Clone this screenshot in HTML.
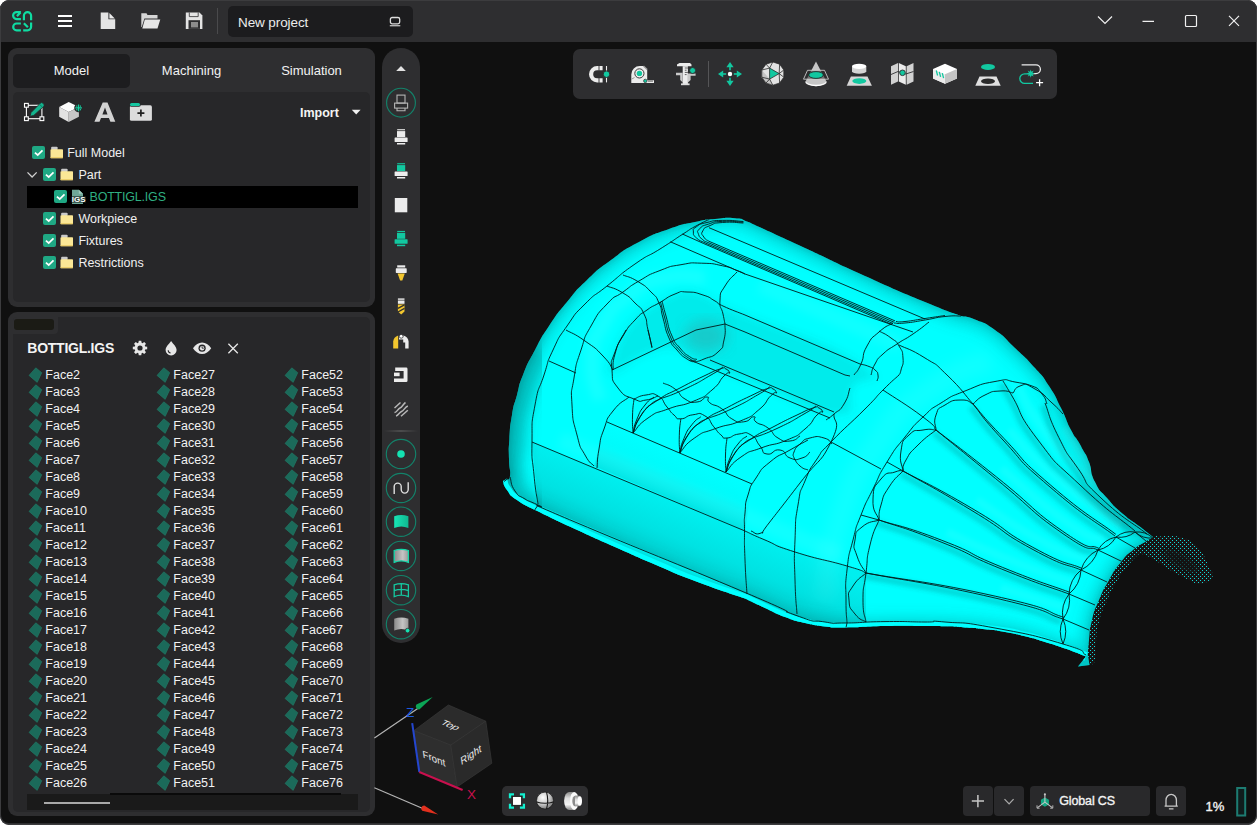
<!DOCTYPE html>
<html lang="en">
<head>
<meta charset="utf-8">
<title>New project</title>
<style>
*{box-sizing:border-box;margin:0;padding:0}
html,body{width:1257px;height:825px;overflow:hidden;background:#fff}
body{font-family:"Liberation Sans",sans-serif;font-size:13px;color:#f0f0f0;position:relative}
.abs{position:absolute}
#win{position:absolute;left:0;top:0;width:1257px;height:825px;background:#2e2e30;border-radius:9px;overflow:hidden}
#view{position:absolute;left:1px;top:42px;width:1255px;height:781px;background:#101010;border-radius:0 0 8px 8px}
#titlebar{position:absolute;left:0;top:0;width:1257px;height:42px;background:#2e2e30}
#proj{position:absolute;left:228px;top:6px;width:185px;height:31px;background:#1c1c1e;border-radius:5px}
#proj span{position:absolute;left:10px;top:9px;font-size:13.5px;color:#ececec;letter-spacing:-0.1px}
.sep{position:absolute;background:#4a4a4c}
/* left panels */
.panel{position:absolute;background:#2e2e30;border-radius:9px}
.inner{position:absolute;background:#272729;border-radius:5px}
.tab{position:absolute;top:6px;height:34px;line-height:33px;text-align:center;font-size:13px;color:#f2f2f2;border-radius:5px}
.tab.sel{background:#1d1d1f}
.row{position:absolute;height:22px;line-height:22px;font-size:12.5px;color:#f0f0f0;white-space:nowrap}
.cb{position:absolute;width:13px;height:13px;border-radius:2px;background:#1fa884}
.cb svg{position:absolute;left:0;top:0}
.fold{position:absolute;width:14px;height:13px}
.face{position:absolute;font-size:12.5px;line-height:17px;height:17px;color:#f2f2f2;white-space:nowrap}
.fi{position:absolute;width:15px;height:16.4px}
/* toolbars */
#vbar{position:absolute;left:382px;top:48px;width:38px;height:595px;background:#2e2e30;border-radius:19px}
#tbar{position:absolute;left:573px;top:49px;width:484px;height:50px;background:#2e2e30;border-radius:7px}
.btn{position:absolute;background:#2e2e30;border-radius:4px}
</style>
</head>
<body>
<div id="win">
<div id="view"></div>
<div id="titlebar"></div>

<svg class="abs" style="left:0;top:0" width="1257" height="825" viewBox="0 0 1257 825">
<defs>
<pattern id="stp" width="4" height="4" patternUnits="userSpaceOnUse"><rect width="4" height="4" fill="#181414"/><rect x="0" y="0" width="1" height="1" fill="#0fd6d6"/><rect x="2" y="2" width="1" height="1" fill="#0fd6d6"/></pattern>
<clipPath id="bodyclip"><path d="M503.0 481.0C504.0 480.3 503.7 480.7 506.0 479.0C508.3 477.3 509.0 482.7 510.0 476.0C511.0 469.3 509.2 471.3 509.0 459.0C508.8 446.7 508.4 453.7 509.4 439.0C510.4 424.3 509.5 429.7 512.0 415.0C514.5 400.3 513.3 408.3 517.0 395.0C520.7 381.7 517.0 390.0 523.0 375.0C529.0 360.0 526.3 366.3 535.0 350.0C543.7 333.7 538.3 342.0 549.0 326.0C559.7 310.0 554.3 317.3 567.0 302.0C579.7 286.7 572.3 294.0 587.0 280.0C601.7 266.0 593.7 272.7 611.0 260.0C628.3 247.3 619.7 252.3 639.0 242.0C658.3 231.7 650.3 235.7 669.0 229.0C687.7 222.3 679.7 225.3 695.0 222.0C710.3 218.7 701.7 220.2 715.0 219.0C728.3 217.8 724.3 217.5 735.0 218.3C745.7 219.1 738.7 218.5 747.0 221.5C755.3 224.5 740.7 218.5 760.0 227.3C779.3 236.1 770.0 231.8 805.0 248.0C840.0 264.2 825.0 258.0 865.0 276.0C905.0 294.0 893.0 288.7 925.0 302.0C957.0 315.3 949.0 311.3 961.0 316.0C965.7 317.2 963.7 314.8 975.0 319.5C986.3 324.2 981.7 320.5 995.0 330.0C1008.3 339.5 1001.7 335.3 1015.0 348.0C1028.3 360.7 1023.7 355.3 1035.0 368.0C1046.3 380.7 1040.3 372.7 1049.0 386.0C1057.7 399.3 1053.7 393.3 1061.0 408.0C1068.3 422.7 1065.3 419.0 1071.0 430.0C1076.7 441.0 1074.0 434.3 1078.0 441.0C1082.0 447.7 1079.3 443.0 1083.0 450.0C1086.7 457.0 1085.0 451.3 1089.0 462.0C1093.0 472.7 1089.0 470.0 1095.0 482.0C1101.0 494.0 1097.7 487.3 1107.0 498.0C1116.3 508.7 1112.3 504.7 1123.0 514.0C1133.7 523.3 1129.0 518.3 1139.0 526.0C1149.0 533.7 1148.3 533.3 1153.0 537.0C1150.3 538.7 1151.7 537.7 1145.0 542.0C1138.3 546.3 1141.0 543.3 1133.0 550.0C1125.0 556.7 1129.0 552.0 1121.0 562.0C1113.0 572.0 1116.3 567.3 1109.0 580.0C1101.7 592.7 1104.7 586.7 1099.0 600.0C1093.3 613.3 1095.3 606.7 1092.0 620.0C1088.7 633.3 1090.3 628.0 1089.0 640.0C1087.7 652.0 1088.3 650.7 1088.0 656.0L1089.5 665L1078 666.5L1086 656.5C1079.0 653.8 1078.7 653.3 1065.0 648.5C1051.3 643.7 1058.3 646.1 1045.0 642.0C1031.7 637.9 1038.3 639.6 1025.0 636.3C1011.7 633.0 1018.3 634.3 1005.0 632.0C991.7 629.7 998.3 630.8 985.0 629.3C971.7 627.8 978.3 628.5 965.0 627.5C951.7 626.5 958.3 626.8 945.0 626.3C931.7 625.8 945.0 626.1 925.0 626.0C905.0 625.9 911.7 625.5 885.0 626.0C858.3 626.5 865.0 627.3 845.0 627.4C825.0 627.5 838.3 627.9 825.0 626.4C811.7 624.9 818.3 626.1 805.0 623.0C791.7 619.9 798.3 622.0 785.0 617.0C771.7 612.0 778.3 614.2 765.0 608.0C751.7 601.8 751.7 601.7 745.0 598.5C728.3 592.7 725.0 592.3 695.0 581.0C665.0 569.7 681.7 575.8 655.0 564.5C628.3 553.2 641.7 558.8 615.0 547.0C588.3 535.2 601.7 541.3 575.0 529.0C548.3 516.7 548.3 516.3 535.0 510.0C529.0 506.7 526.3 506.7 517.0 500.0C507.7 493.3 511.7 496.3 507.0 490.0C502.3 483.7 504.3 484.0 503.0 481.0Z"/></clipPath>
<filter id="b8" x="-20%" y="-20%" width="140%" height="140%"><feGaussianBlur stdDeviation="7"/></filter>
<filter id="b4" x="-20%" y="-20%" width="140%" height="140%"><feGaussianBlur stdDeviation="4"/></filter>
<filter id="b2" x="-20%" y="-20%" width="140%" height="140%"><feGaussianBlur stdDeviation="2"/></filter>
<linearGradient id="sideg" gradientUnits="userSpaceOnUse" x1="640" y1="487" x2="614" y2="549"><stop offset="0" stop-color="#006060" stop-opacity="0.1"/><stop offset="0.5" stop-color="#006060" stop-opacity="0.18"/><stop offset="0.85" stop-color="#006060" stop-opacity="0.3"/><stop offset="1" stop-color="#006060" stop-opacity="0.44"/></linearGradient>
<linearGradient id="bandg" gradientUnits="userSpaceOnUse" x1="680" y1="453" x2="662" y2="496"><stop offset="0" stop-color="#006060" stop-opacity="0"/><stop offset="0.5" stop-color="#006060" stop-opacity="0.03"/><stop offset="1" stop-color="#006060" stop-opacity="0.17"/></linearGradient>
</defs>
<path d="M1152.4 538.0C1160.4 532.8 1154.5 537.2 1160.0 536.5C1165.5 535.8 1164.3 536.2 1169.0 536.0C1173.7 535.8 1169.1 535.3 1174.0 536.0C1178.9 536.7 1177.5 535.9 1183.6 538.0C1189.7 540.1 1187.1 538.5 1192.4 542.4C1197.7 546.3 1195.2 544.1 1199.6 549.6C1204.0 555.1 1202.1 552.4 1205.5 559.0C1208.9 565.6 1207.6 565.0 1209.8 569.3C1212.0 573.6 1211.4 568.9 1212.0 572.0C1212.6 575.1 1213.8 575.2 1211.6 578.7C1209.4 582.2 1210.0 580.7 1205.5 582.4C1201.0 584.1 1202.8 584.3 1198.0 583.8C1193.2 583.3 1196.8 583.7 1191.0 581.0C1185.2 578.3 1188.0 579.7 1180.7 575.8C1173.4 571.9 1176.6 573.9 1169.0 569.3C1161.4 564.7 1164.5 566.1 1158.0 562.0C1151.5 557.9 1154.8 559.7 1149.5 557.0C1144.2 554.3 1146.5 555.7 1142.0 554.0C1137.5 552.3 1132.5 557.3 1136.0 552.0C1139.5 546.7 1144.4 543.2 1152.4 538.0Z" fill="url(#stp)"/>
<ellipse cx="1181" cy="561" rx="20" ry="7" transform="rotate(32 1181 561)" fill="#101010" fill-opacity="0.7" filter="url(#b2)"/>
<path d="M1153.0 537.0C1150.3 538.7 1151.7 537.7 1145.0 542.0C1138.3 546.3 1141.0 543.3 1133.0 550.0C1125.0 556.7 1129.0 552.0 1121.0 562.0C1113.0 572.0 1116.3 567.3 1109.0 580.0C1101.7 592.7 1104.7 586.7 1099.0 600.0C1093.3 613.3 1095.3 606.7 1092.0 620.0C1088.7 633.3 1090.3 628.0 1089.0 640.0C1087.7 652.0 1088.3 650.7 1088.0 656.0L1090 664C1091.7 662.7 1093.0 667.3 1095.0 660.0C1097.0 652.7 1094.7 654.7 1096.0 642.0C1097.3 629.3 1095.7 635.0 1099.0 622.0C1102.3 609.0 1100.3 616.0 1106.0 603.0C1111.7 590.0 1108.7 595.3 1116.0 583.0C1123.3 570.7 1120.0 576.0 1128.0 566.0C1136.0 556.0 1132.7 560.0 1140.0 553.0C1147.3 546.0 1145.7 550.3 1150.0 545.0C1154.3 539.7 1152.0 539.7 1153.0 537.0Z" fill="url(#stp)"/>
<path d="M503.0 481.0C504.0 480.3 503.7 480.7 506.0 479.0C508.3 477.3 509.0 482.7 510.0 476.0C511.0 469.3 509.2 471.3 509.0 459.0C508.8 446.7 508.4 453.7 509.4 439.0C510.4 424.3 509.5 429.7 512.0 415.0C514.5 400.3 513.3 408.3 517.0 395.0C520.7 381.7 517.0 390.0 523.0 375.0C529.0 360.0 526.3 366.3 535.0 350.0C543.7 333.7 538.3 342.0 549.0 326.0C559.7 310.0 554.3 317.3 567.0 302.0C579.7 286.7 572.3 294.0 587.0 280.0C601.7 266.0 593.7 272.7 611.0 260.0C628.3 247.3 619.7 252.3 639.0 242.0C658.3 231.7 650.3 235.7 669.0 229.0C687.7 222.3 679.7 225.3 695.0 222.0C710.3 218.7 701.7 220.2 715.0 219.0C728.3 217.8 724.3 217.5 735.0 218.3C745.7 219.1 738.7 218.5 747.0 221.5C755.3 224.5 740.7 218.5 760.0 227.3C779.3 236.1 770.0 231.8 805.0 248.0C840.0 264.2 825.0 258.0 865.0 276.0C905.0 294.0 893.0 288.7 925.0 302.0C957.0 315.3 949.0 311.3 961.0 316.0C965.7 317.2 963.7 314.8 975.0 319.5C986.3 324.2 981.7 320.5 995.0 330.0C1008.3 339.5 1001.7 335.3 1015.0 348.0C1028.3 360.7 1023.7 355.3 1035.0 368.0C1046.3 380.7 1040.3 372.7 1049.0 386.0C1057.7 399.3 1053.7 393.3 1061.0 408.0C1068.3 422.7 1065.3 419.0 1071.0 430.0C1076.7 441.0 1074.0 434.3 1078.0 441.0C1082.0 447.7 1079.3 443.0 1083.0 450.0C1086.7 457.0 1085.0 451.3 1089.0 462.0C1093.0 472.7 1089.0 470.0 1095.0 482.0C1101.0 494.0 1097.7 487.3 1107.0 498.0C1116.3 508.7 1112.3 504.7 1123.0 514.0C1133.7 523.3 1129.0 518.3 1139.0 526.0C1149.0 533.7 1148.3 533.3 1153.0 537.0C1150.3 538.7 1151.7 537.7 1145.0 542.0C1138.3 546.3 1141.0 543.3 1133.0 550.0C1125.0 556.7 1129.0 552.0 1121.0 562.0C1113.0 572.0 1116.3 567.3 1109.0 580.0C1101.7 592.7 1104.7 586.7 1099.0 600.0C1093.3 613.3 1095.3 606.7 1092.0 620.0C1088.7 633.3 1090.3 628.0 1089.0 640.0C1087.7 652.0 1088.3 650.7 1088.0 656.0L1089.5 665L1078 666.5L1086 656.5C1079.0 653.8 1078.7 653.3 1065.0 648.5C1051.3 643.7 1058.3 646.1 1045.0 642.0C1031.7 637.9 1038.3 639.6 1025.0 636.3C1011.7 633.0 1018.3 634.3 1005.0 632.0C991.7 629.7 998.3 630.8 985.0 629.3C971.7 627.8 978.3 628.5 965.0 627.5C951.7 626.5 958.3 626.8 945.0 626.3C931.7 625.8 945.0 626.1 925.0 626.0C905.0 625.9 911.7 625.5 885.0 626.0C858.3 626.5 865.0 627.3 845.0 627.4C825.0 627.5 838.3 627.9 825.0 626.4C811.7 624.9 818.3 626.1 805.0 623.0C791.7 619.9 798.3 622.0 785.0 617.0C771.7 612.0 778.3 614.2 765.0 608.0C751.7 601.8 751.7 601.7 745.0 598.5C728.3 592.7 725.0 592.3 695.0 581.0C665.0 569.7 681.7 575.8 655.0 564.5C628.3 553.2 641.7 558.8 615.0 547.0C588.3 535.2 601.7 541.3 575.0 529.0C548.3 516.7 548.3 516.3 535.0 510.0C529.0 506.7 526.3 506.7 517.0 500.0C507.7 493.3 511.7 496.3 507.0 490.0C502.3 483.7 504.3 484.0 503.0 481.0Z" fill="#00ffff"/>
<g clip-path="url(#bodyclip)">
<path d="M503.0 481.0C504.0 480.3 503.7 480.7 506.0 479.0C508.3 477.3 509.0 482.7 510.0 476.0C511.0 469.3 509.2 471.3 509.0 459.0C508.8 446.7 508.4 453.7 509.4 439.0C510.4 424.3 509.5 429.7 512.0 415.0C514.5 400.3 513.3 408.3 517.0 395.0C520.7 381.7 517.0 390.0 523.0 375.0C529.0 360.0 526.3 366.3 535.0 350.0C543.7 333.7 538.3 342.0 549.0 326.0C559.7 310.0 554.3 317.3 567.0 302.0C579.7 286.7 572.3 294.0 587.0 280.0C601.7 266.0 593.7 272.7 611.0 260.0C628.3 247.3 619.7 252.3 639.0 242.0C658.3 231.7 650.3 235.7 669.0 229.0C687.7 222.3 679.7 225.3 695.0 222.0C710.3 218.7 701.7 220.2 715.0 219.0C728.3 217.8 724.3 217.5 735.0 218.3C745.7 219.1 738.7 218.5 747.0 221.5C755.3 224.5 740.7 218.5 760.0 227.3C779.3 236.1 770.0 231.8 805.0 248.0C840.0 264.2 825.0 258.0 865.0 276.0C905.0 294.0 893.0 288.7 925.0 302.0C957.0 315.3 949.0 311.3 961.0 316.0C965.7 317.2 963.7 314.8 975.0 319.5C986.3 324.2 981.7 320.5 995.0 330.0C1008.3 339.5 1001.7 335.3 1015.0 348.0C1028.3 360.7 1023.7 355.3 1035.0 368.0C1046.3 380.7 1040.3 372.7 1049.0 386.0C1057.7 399.3 1053.7 393.3 1061.0 408.0C1068.3 422.7 1065.3 419.0 1071.0 430.0C1076.7 441.0 1074.0 434.3 1078.0 441.0C1082.0 447.7 1079.3 443.0 1083.0 450.0C1086.7 457.0 1085.0 451.3 1089.0 462.0C1093.0 472.7 1089.0 470.0 1095.0 482.0C1101.0 494.0 1097.7 487.3 1107.0 498.0C1116.3 508.7 1112.3 504.7 1123.0 514.0C1133.7 523.3 1129.0 518.3 1139.0 526.0C1149.0 533.7 1148.3 533.3 1153.0 537.0C1150.3 538.7 1151.7 537.7 1145.0 542.0C1138.3 546.3 1141.0 543.3 1133.0 550.0C1125.0 556.7 1129.0 552.0 1121.0 562.0C1113.0 572.0 1116.3 567.3 1109.0 580.0C1101.7 592.7 1104.7 586.7 1099.0 600.0C1093.3 613.3 1095.3 606.7 1092.0 620.0C1088.7 633.3 1090.3 628.0 1089.0 640.0C1087.7 652.0 1088.3 650.7 1088.0 656.0L1089.5 665L1078 666.5L1086 656.5C1079.0 653.8 1078.7 653.3 1065.0 648.5C1051.3 643.7 1058.3 646.1 1045.0 642.0C1031.7 637.9 1038.3 639.6 1025.0 636.3C1011.7 633.0 1018.3 634.3 1005.0 632.0C991.7 629.7 998.3 630.8 985.0 629.3C971.7 627.8 978.3 628.5 965.0 627.5C951.7 626.5 958.3 626.8 945.0 626.3C931.7 625.8 945.0 626.1 925.0 626.0C905.0 625.9 911.7 625.5 885.0 626.0C858.3 626.5 865.0 627.3 845.0 627.4C825.0 627.5 838.3 627.9 825.0 626.4C811.7 624.9 818.3 626.1 805.0 623.0C791.7 619.9 798.3 622.0 785.0 617.0C771.7 612.0 778.3 614.2 765.0 608.0C751.7 601.8 751.7 601.7 745.0 598.5C728.3 592.7 725.0 592.3 695.0 581.0C665.0 569.7 681.7 575.8 655.0 564.5C628.3 553.2 641.7 558.8 615.0 547.0C588.3 535.2 601.7 541.3 575.0 529.0C548.3 516.7 548.3 516.3 535.0 510.0C529.0 506.7 526.3 506.7 517.0 500.0C507.7 493.3 511.7 496.3 507.0 490.0C502.3 483.7 504.3 484.0 503.0 481.0Z" fill="none" stroke="#006e6e" stroke-opacity="0.28" stroke-width="16" filter="url(#b8)"/>
<path d="M503.0 481.0C504.0 480.3 503.7 480.7 506.0 479.0C508.3 477.3 509.0 482.7 510.0 476.0C511.0 469.3 509.2 471.3 509.0 459.0C508.8 446.7 508.4 453.7 509.4 439.0C510.4 424.3 509.5 429.7 512.0 415.0C514.5 400.3 513.3 408.3 517.0 395.0C520.7 381.7 517.0 390.0 523.0 375.0C529.0 360.0 526.3 366.3 535.0 350.0C543.7 333.7 538.3 342.0 549.0 326.0C559.7 310.0 554.3 317.3 567.0 302.0C579.7 286.7 572.3 294.0 587.0 280.0C601.7 266.0 593.7 272.7 611.0 260.0C628.3 247.3 619.7 252.3 639.0 242.0C658.3 231.7 650.3 235.7 669.0 229.0C687.7 222.3 679.7 225.3 695.0 222.0C710.3 218.7 701.7 220.2 715.0 219.0C728.3 217.8 724.3 217.5 735.0 218.3C745.7 219.1 738.7 218.5 747.0 221.5C755.3 224.5 740.7 218.5 760.0 227.3C779.3 236.1 770.0 231.8 805.0 248.0C840.0 264.2 825.0 258.0 865.0 276.0C905.0 294.0 893.0 288.7 925.0 302.0C957.0 315.3 949.0 311.3 961.0 316.0C965.7 317.2 963.7 314.8 975.0 319.5C986.3 324.2 981.7 320.5 995.0 330.0C1008.3 339.5 1001.7 335.3 1015.0 348.0C1028.3 360.7 1023.7 355.3 1035.0 368.0C1046.3 380.7 1040.3 372.7 1049.0 386.0C1057.7 399.3 1053.7 393.3 1061.0 408.0C1068.3 422.7 1065.3 419.0 1071.0 430.0C1076.7 441.0 1074.0 434.3 1078.0 441.0C1082.0 447.7 1079.3 443.0 1083.0 450.0C1086.7 457.0 1085.0 451.3 1089.0 462.0C1093.0 472.7 1089.0 470.0 1095.0 482.0C1101.0 494.0 1097.7 487.3 1107.0 498.0C1116.3 508.7 1112.3 504.7 1123.0 514.0C1133.7 523.3 1129.0 518.3 1139.0 526.0C1149.0 533.7 1148.3 533.3 1153.0 537.0C1150.3 538.7 1151.7 537.7 1145.0 542.0C1138.3 546.3 1141.0 543.3 1133.0 550.0C1125.0 556.7 1129.0 552.0 1121.0 562.0C1113.0 572.0 1116.3 567.3 1109.0 580.0C1101.7 592.7 1104.7 586.7 1099.0 600.0C1093.3 613.3 1095.3 606.7 1092.0 620.0C1088.7 633.3 1090.3 628.0 1089.0 640.0C1087.7 652.0 1088.3 650.7 1088.0 656.0L1089.5 665L1078 666.5L1086 656.5C1079.0 653.8 1078.7 653.3 1065.0 648.5C1051.3 643.7 1058.3 646.1 1045.0 642.0C1031.7 637.9 1038.3 639.6 1025.0 636.3C1011.7 633.0 1018.3 634.3 1005.0 632.0C991.7 629.7 998.3 630.8 985.0 629.3C971.7 627.8 978.3 628.5 965.0 627.5C951.7 626.5 958.3 626.8 945.0 626.3C931.7 625.8 945.0 626.1 925.0 626.0C905.0 625.9 911.7 625.5 885.0 626.0C858.3 626.5 865.0 627.3 845.0 627.4C825.0 627.5 838.3 627.9 825.0 626.4C811.7 624.9 818.3 626.1 805.0 623.0C791.7 619.9 798.3 622.0 785.0 617.0C771.7 612.0 778.3 614.2 765.0 608.0C751.7 601.8 751.7 601.7 745.0 598.5C728.3 592.7 725.0 592.3 695.0 581.0C665.0 569.7 681.7 575.8 655.0 564.5C628.3 553.2 641.7 558.8 615.0 547.0C588.3 535.2 601.7 541.3 575.0 529.0C548.3 516.7 548.3 516.3 535.0 510.0C529.0 506.7 526.3 506.7 517.0 500.0C507.7 493.3 511.7 496.3 507.0 490.0C502.3 483.7 504.3 484.0 503.0 481.0Z" fill="none" stroke="#005a5a" stroke-opacity="0.18" stroke-width="5" filter="url(#b2)"/>
<path d="M613.0 372.0C601.3 372.7 611.7 366.0 615.0 354.0C618.3 342.0 616.3 347.3 623.0 336.0C629.7 324.7 627.0 328.7 635.0 320.0C643.0 311.3 639.0 315.7 647.0 310.0C655.0 304.3 649.7 308.3 659.0 303.0C668.3 297.7 665.7 297.7 675.0 294.0C684.3 290.3 677.7 291.7 687.0 292.0C696.3 292.3 691.0 290.3 703.0 295.0C715.0 299.7 709.0 299.3 723.0 306.0C737.0 312.7 699.3 295.7 745.0 315.0C790.7 334.3 824.3 339.7 860.0 364.0C895.7 388.3 860.7 371.3 852.0 388.0C843.3 404.7 864.7 415.0 834.0 414.0C803.3 413.0 804.7 402.3 760.0 385.0C715.3 367.7 726.7 373.7 700.0 362.0C673.3 350.3 696.7 353.3 680.0 350.0C663.3 346.7 672.3 344.7 650.0 352.0C627.7 359.3 624.7 371.3 613.0 372.0Z" fill="#006060" fill-opacity="0.13" filter="url(#b4)"/>
<ellipse cx="706" cy="336" rx="22" ry="16" fill="#4a8080" fill-opacity="0.3" filter="url(#b8)"/>
<path d="M532.0 442.0L745.0 531.0L795.0 552.0L847.0 566.0L866.0 573.0L866.0 625.0L845.0 628.0L795.0 616.0L745.0 593.0L538.0 505.0Z" fill="url(#sideg)"/>
<path d="M607.0 422.0L752.0 484.0L745.0 531.0L594.0 466.0Z" fill="url(#bandg)"/>
<path d="M530.0 520.0C521.7 507.0 513.0 507.7 505.0 481.0C497.0 454.3 502.7 468.7 506.0 440.0C509.3 411.3 505.3 426.7 515.0 395.0C524.7 363.3 528.3 361.7 535.0 345.0" fill="none" stroke="#006060" stroke-opacity="0.3" stroke-width="40" filter="url(#b8)"/>
<path d="M600.0 400.0C597.3 386.7 591.0 385.0 592.0 360.0C593.0 335.0 590.3 346.7 603.0 325.0C615.7 303.3 609.3 310.7 630.0 295.0C650.7 279.3 640.0 283.7 665.0 278.0C690.0 272.3 691.7 278.0 705.0 278.0" fill="none" stroke="#fff" stroke-opacity="0.08" stroke-width="14" filter="url(#b4)"/>
<path d="M560.0 440.0L840.0 555.0" fill="none" stroke="#fff" stroke-opacity="0.06" stroke-width="16" filter="url(#b4)"/>
<path d="M760.0 285.0L900.0 345.0" fill="none" stroke="#fff" stroke-opacity="0.06" stroke-width="16" filter="url(#b4)"/>
<path d="M990.0 360.0C970.0 370.0 966.7 363.3 930.0 390.0C893.3 416.7 910.0 396.7 880.0 440.0C850.0 483.3 858.3 466.7 840.0 520.0C821.7 573.3 830.0 573.3 825.0 600.0" fill="none" stroke="#fff" stroke-opacity="0.06" stroke-width="22" filter="url(#b8)"/>
<path d="M1043.0 406.0C1047.6 417.5 1045.8 418.7 1056.8 440.5C1067.8 462.3 1061.9 451.3 1076.0 471.5C1090.1 491.7 1076.0 479.2 1099.0 501.0C1122.0 522.8 1129.7 525.0 1145.0 537.0" fill="none" stroke="#005050" stroke-opacity="0.22" stroke-width="6" filter="url(#b2)"/>
<path d="M1064.8 427.5C1071.2 437.8 1069.9 438.3 1084.0 458.5C1098.1 478.7 1084.0 466.2 1107.0 488.0C1130.0 509.8 1137.7 512.0 1153.0 524.0" fill="none" stroke="#fff" stroke-opacity="0.06" stroke-width="8" filter="url(#b2)"/>
<path d="M1001.0 384.0C1004.0 389.0 998.3 379.3 1010.0 399.0C1021.7 418.7 1013.3 413.3 1036.0 443.0C1058.7 472.7 1045.7 457.7 1078.0 488.0C1110.3 518.3 1114.7 518.7 1133.0 534.0" fill="none" stroke="#005050" stroke-opacity="0.22" stroke-width="6" filter="url(#b2)"/>
<path d="M1018.0 386.0C1026.7 400.7 1021.3 400.3 1044.0 430.0C1066.7 459.7 1053.7 444.7 1086.0 475.0C1118.3 505.3 1122.7 505.7 1141.0 521.0" fill="none" stroke="#fff" stroke-opacity="0.06" stroke-width="8" filter="url(#b2)"/>
<path d="M971.0 407.0C981.0 419.0 975.3 415.3 1001.0 443.0C1026.7 470.7 1010.7 458.0 1048.0 490.0C1085.3 522.0 1091.3 522.7 1113.0 539.0" fill="none" stroke="#005050" stroke-opacity="0.22" stroke-width="6" filter="url(#b2)"/>
<path d="M1009.0 430.0C1024.7 445.7 1018.7 445.0 1056.0 477.0C1093.3 509.0 1099.3 509.7 1121.0 526.0" fill="none" stroke="#fff" stroke-opacity="0.06" stroke-width="8" filter="url(#b2)"/>
<path d="M934.0 433.0C953.8 449.2 951.5 447.2 993.5 481.5C1035.5 515.8 1025.8 512.2 1060.0 536.0C1094.2 559.8 1084.0 547.3 1096.0 553.0" fill="none" stroke="#005050" stroke-opacity="0.22" stroke-width="6" filter="url(#b2)"/>
<path d="M1001.5 468.5C1023.7 486.7 1033.8 499.2 1068.0 523.0C1102.2 546.8 1092.0 534.3 1104.0 540.0" fill="none" stroke="#fff" stroke-opacity="0.06" stroke-width="8" filter="url(#b2)"/>
<path d="M901.0 474.0C923.7 487.0 926.0 487.0 969.0 513.0C1012.0 539.0 993.3 532.0 1030.0 552.0C1066.7 572.0 1062.7 566.0 1079.0 573.0" fill="none" stroke="#005050" stroke-opacity="0.22" stroke-width="6" filter="url(#b2)"/>
<path d="M977.0 500.0C997.3 513.0 1001.3 519.0 1038.0 539.0C1074.7 559.0 1070.7 553.0 1087.0 560.0" fill="none" stroke="#fff" stroke-opacity="0.06" stroke-width="8" filter="url(#b2)"/>
<path d="M877.0 523.0C897.7 530.3 898.2 528.7 939.0 545.0C979.8 561.3 956.8 554.7 999.5 572.0C1042.2 589.3 1044.5 588.7 1067.0 597.0" fill="none" stroke="#005050" stroke-opacity="0.22" stroke-width="6" filter="url(#b2)"/>
<path d="M947.0 532.0C967.2 541.0 964.8 541.7 1007.5 559.0C1050.2 576.3 1052.5 575.7 1075.0 584.0" fill="none" stroke="#fff" stroke-opacity="0.06" stroke-width="8" filter="url(#b2)"/>
<path d="M864.0 576.0C907.0 584.3 927.3 585.7 993.0 601.0C1058.7 616.3 1038.3 615.0 1061.0 622.0" fill="none" stroke="#005050" stroke-opacity="0.22" stroke-width="6" filter="url(#b2)"/>
<path d="M1001.0 588.0C1023.7 595.0 1046.3 602.0 1069.0 609.0" fill="none" stroke="#fff" stroke-opacity="0.06" stroke-width="8" filter="url(#b2)"/>
<path d="M1086.0 656.5C1079.0 653.8 1078.7 653.3 1065.0 648.5C1051.3 643.7 1058.3 646.1 1045.0 642.0C1031.7 637.9 1038.3 639.6 1025.0 636.3C1011.7 633.0 1018.3 634.3 1005.0 632.0C991.7 629.7 998.3 630.8 985.0 629.3C971.7 627.8 978.3 628.5 965.0 627.5C951.7 626.5 958.3 626.8 945.0 626.3C931.7 625.8 945.0 626.1 925.0 626.0C905.0 625.9 911.7 625.5 885.0 626.0C858.3 626.5 865.0 627.3 845.0 627.4C825.0 627.5 838.3 627.9 825.0 626.4C811.7 624.9 818.3 626.1 805.0 623.0C791.7 619.9 798.3 622.0 785.0 617.0C771.7 612.0 778.3 614.2 765.0 608.0C751.7 601.8 751.7 601.7 745.0 598.5C728.3 592.7 725.0 592.3 695.0 581.0C665.0 569.7 681.7 575.8 655.0 564.5C628.3 553.2 641.7 558.8 615.0 547.0C588.3 535.2 601.7 541.3 575.0 529.0C548.3 516.7 548.3 516.3 535.0 510.0C529.0 506.7 526.3 506.7 517.0 500.0C507.7 493.3 511.7 496.3 507.0 490.0C502.3 483.7 504.3 484.0 503.0 481.0" fill="none" stroke="#00ffff" stroke-width="9"/>
<path d="M538.0 504.0C536.7 494.3 536.0 496.0 534.0 475.0C532.0 454.0 531.7 464.3 532.0 441.0C532.3 417.7 531.0 427.0 535.0 405.0C539.0 383.0 538.0 393.3 544.0 375.0C550.0 356.7 545.3 366.3 553.0 350.0C560.7 333.7 556.3 341.3 567.0 326.0C577.7 310.7 571.7 317.3 585.0 304.0C598.3 290.7 590.3 299.3 607.0 286.0C623.7 272.7 617.3 276.3 635.0 264.0C652.7 251.7 644.0 259.0 660.0 249.0C676.0 239.0 671.3 241.5 683.0 234.0C694.7 226.5 686.3 231.3 695.0 226.5C703.7 221.7 704.3 221.8 709.0 219.5M594.0 466.0C591.0 462.3 590.7 465.3 585.0 455.0C579.3 444.7 581.3 451.7 577.0 435.0C572.7 418.3 573.0 424.0 572.0 405.0C571.0 386.0 571.0 396.3 574.0 378.0C577.0 359.7 575.3 367.3 581.0 350.0C586.7 332.7 582.3 341.3 591.0 326.0C599.7 310.7 596.3 315.3 607.0 304.0C617.7 292.7 612.3 299.7 623.0 292.0C633.7 284.3 626.7 288.2 639.0 281.0C651.3 273.8 646.0 275.9 660.0 270.5C674.0 265.1 667.1 267.1 681.0 264.7C694.9 262.3 687.8 262.8 701.7 263.2C715.6 263.6 710.8 263.4 722.6 265.8C734.4 268.2 729.5 267.8 737.0 270.5C744.5 273.2 742.3 272.8 745.0 274.0M597.0 468.0C597.7 461.7 596.7 462.0 599.0 449.0C601.3 436.0 599.3 441.7 604.0 429.0C608.7 416.3 604.7 421.7 613.0 411.0C621.3 400.3 623.7 401.7 629.0 397.0M613.0 370.0C613.7 364.7 611.7 365.3 615.0 354.0C618.3 342.7 616.3 347.3 623.0 336.0C629.7 324.7 627.0 328.7 635.0 320.0C643.0 311.3 639.0 315.7 647.0 310.0C655.0 304.3 649.7 308.3 659.0 303.0C668.3 297.7 665.7 297.7 675.0 294.0C684.3 290.3 677.7 291.7 687.0 292.0C696.3 292.3 693.7 292.0 703.0 295.0C712.3 298.0 708.3 297.3 715.0 301.0C721.7 304.7 713.0 301.3 723.0 306.0C733.0 310.7 737.7 312.0 745.0 315.0M549.0 361.0L576.0 373.0M566.0 330.0C572.3 333.7 572.7 332.3 585.0 341.0C597.3 349.7 593.7 346.3 603.0 356.0C612.3 365.7 609.7 365.3 613.0 370.0M607.0 286.0C612.3 288.3 613.7 287.3 623.0 293.0C632.3 298.7 628.0 296.0 635.0 303.0C642.0 310.0 639.7 305.0 644.0 314.0C648.3 323.0 645.3 318.7 648.0 330.0C650.7 341.3 650.7 342.0 652.0 348.0M623.0 275.0C628.0 277.2 628.7 275.9 638.0 281.6C647.3 287.3 644.0 284.9 651.0 292.0C658.0 299.1 655.0 294.3 659.0 303.0C663.0 311.7 659.7 306.3 663.0 318.0C666.3 329.7 664.3 327.3 669.0 338.0C673.7 348.7 671.0 343.0 677.0 350.0C683.0 357.0 681.0 355.0 687.0 359.0C693.0 363.0 692.3 361.0 695.0 362.0M660.5 302.0C661.8 307.0 661.2 305.3 664.5 317.0C667.8 328.7 665.8 326.3 670.5 337.0C675.2 347.7 672.5 342.0 678.5 349.0C684.5 356.0 682.7 354.0 688.5 358.0C694.3 362.0 693.5 360.0 696.0 361.0M662.0 301.0C663.3 306.0 662.7 304.3 666.0 316.0C669.3 327.7 667.3 325.3 672.0 336.0C676.7 346.7 674.2 341.1 680.0 348.0C685.8 354.9 683.8 352.8 689.5 356.6C695.2 360.4 694.5 358.5 697.0 359.5M670.4 241.8L745.0 274.0L913.0 332.0M709.0 227.7L925.0 319.0M743.4 221.5C736.4 221.1 734.6 220.1 722.5 220.4C710.4 220.7 715.7 220.4 707.0 222.5C698.3 224.6 701.0 223.5 696.5 226.7C692.0 229.9 693.4 228.2 693.4 232.0C693.4 235.8 693.0 234.6 696.5 238.0C700.0 241.4 701.4 240.9 703.8 242.3L893.0 323.5M743.4 222.2C736.4 222.0 734.1 220.8 722.5 221.4C710.9 222.0 716.1 221.6 708.5 224.1C700.9 226.5 703.0 225.3 699.6 228.8C696.3 232.3 697.6 230.9 698.6 234.5C699.6 238.1 700.1 237.2 702.8 239.7C705.4 242.1 705.2 241.2 706.5 241.9L894.0 322.2M743.4 223.0C736.4 222.8 733.6 221.6 722.5 222.5C711.4 223.4 716.6 222.8 710.0 225.6C703.4 228.4 704.9 227.1 702.8 230.9C700.7 234.7 701.7 233.5 703.8 237.0C705.9 240.5 707.3 239.9 709.0 241.3L895.0 320.9M682.4 234L703.8 243.6L892 324.6M894.0 323.0C897.7 323.0 894.7 324.0 905.0 323.0C915.3 322.0 911.7 322.2 925.0 320.0C938.3 317.8 933.0 317.8 945.0 316.5C957.0 315.2 955.7 316.2 961.0 316.0M896.0 321.5C899.0 321.5 895.3 322.5 905.0 321.5C914.7 320.5 911.7 320.5 925.0 318.5C938.3 316.5 938.3 316.5 945.0 315.5M745.0 315.0L860.0 364.0M860.0 364.0C863.0 364.8 864.0 364.5 869.0 366.5C874.0 368.5 872.0 367.2 875.0 370.0C878.0 372.8 877.3 371.3 878.0 375.0C878.7 378.7 877.3 379.0 877.0 381.0M725.0 324.0L745.0 332.0L845.0 375.0L850.0 376.0M696.0 330.0L725.0 324.0M737.0 272.0C733.0 276.7 730.7 276.7 725.0 286.0C719.3 295.3 720.7 290.7 720.0 300.0C719.3 309.3 721.3 306.0 723.0 314.0C724.7 322.0 724.3 320.7 725.0 324.0M690.0 360.0L830.0 418.0M710.0 360.0L834.0 412.0M850.0 388.0C848.0 393.3 849.3 395.3 844.0 404.0C838.7 412.7 840.0 408.7 834.0 414.0C828.0 419.3 828.7 418.0 826.0 420.0M893.0 323.0C888.3 326.0 887.7 324.3 879.0 332.0C870.3 339.7 873.0 335.3 867.0 346.0C861.0 356.7 865.3 354.3 861.0 364.0C856.7 373.7 856.3 371.3 854.0 375.0M929.0 322.0C923.7 326.0 923.7 326.7 913.0 334.0C902.3 341.3 907.0 337.3 897.0 344.0C887.0 350.7 890.3 347.3 883.0 354.0C875.7 360.7 879.0 357.0 875.0 364.0C871.0 371.0 872.3 371.3 871.0 375.0M879.0 331.0C883.0 333.3 884.3 333.0 891.0 338.0C897.7 343.0 895.0 339.3 899.0 346.0C903.0 352.7 902.3 350.0 903.0 358.0C903.7 366.0 902.3 364.3 901.0 370.0C899.7 375.7 899.7 373.3 899.0 375.0M899.0 345.0C907.7 349.3 909.0 348.0 925.0 358.0C941.0 368.0 931.0 359.7 947.0 375.0C963.0 390.3 964.3 394.3 973.0 404.0M532.0 442.0L745.0 531.0M745.0 531.0C751.7 534.0 748.3 533.0 765.0 540.0C781.7 547.0 767.7 543.3 795.0 552.0C822.3 560.7 823.3 559.0 847.0 566.0C870.7 573.0 859.7 570.7 866.0 573.0M607.0 422.0L752.0 484.0M899.0 375.0C893.7 380.0 894.3 378.7 883.0 390.0C871.7 401.3 882.3 391.7 865.0 409.0C847.7 426.3 847.0 425.3 831.0 442.0C815.0 458.7 825.7 446.0 817.0 459.0C808.3 472.0 811.3 465.7 805.0 481.0C798.7 496.3 801.3 485.3 798.0 505.0C794.7 524.7 796.0 515.0 795.0 540.0C794.0 565.0 794.3 555.3 795.0 580.0C795.7 604.7 796.3 602.7 797.0 614.0M1063.0 414.0C1059.0 410.0 1060.3 410.3 1051.0 402.0C1041.7 393.7 1047.0 395.7 1035.0 389.0C1023.0 382.3 1028.3 384.5 1015.0 382.0C1001.7 379.5 1011.7 378.5 995.0 381.5C978.3 384.5 983.0 383.8 965.0 391.0C947.0 398.2 955.0 394.3 941.0 403.0C927.0 411.7 935.0 405.7 923.0 417.0C911.0 428.3 917.0 422.0 905.0 437.0C893.0 452.0 897.7 444.7 887.0 462.0C876.3 479.3 881.7 471.3 873.0 489.0C864.3 506.7 867.7 498.0 861.0 515.0C854.3 532.0 857.7 521.7 853.0 540.0C848.3 558.3 849.3 550.0 847.0 570.0C844.7 590.0 846.0 582.3 846.0 600.0C846.0 617.7 846.7 615.3 847.0 623.0M883.0 390.0C896.3 399.0 905.3 403.7 923.0 417.0C940.7 430.3 931.7 425.7 936.0 430.0M831.0 442.0L881.0 469.0M887.0 462.0L903.0 471.0M861.0 515.0L879.0 520.0M879.0 520.0C876.0 528.3 874.3 527.3 870.0 545.0C865.7 562.7 868.3 554.7 866.0 573.0C863.7 591.3 863.0 583.7 863.0 600.0C863.0 616.3 865.0 614.7 866.0 622.0M936.0 430.0C936.0 425.0 933.0 423.3 936.0 415.0C939.0 406.7 936.7 410.0 945.0 405.0C953.3 400.0 951.7 400.3 961.0 400.0C970.3 399.7 969.0 402.7 973.0 404.0M903.0 471.0C902.3 464.3 899.0 463.0 901.0 451.0C903.0 439.0 901.7 442.0 909.0 435.0C916.3 428.0 914.0 431.7 923.0 430.0C932.0 428.3 931.7 430.0 936.0 430.0M879.0 520.0C877.0 513.0 872.3 512.7 873.0 499.0C873.7 485.3 873.7 488.0 881.0 479.0C888.3 470.0 887.7 474.7 895.0 472.0C902.3 469.3 900.3 471.3 903.0 471.0M866.0 573.0C863.0 567.3 860.7 567.0 857.0 556.0C853.3 545.0 853.3 549.7 855.0 540.0C856.7 530.3 854.0 533.7 862.0 527.0C870.0 520.3 873.3 522.3 879.0 520.0M866.0 622.0C862.3 619.3 860.7 621.3 855.0 614.0C849.3 606.7 849.7 609.3 849.0 600.0C848.3 590.7 847.3 595.0 853.0 586.0C858.7 577.0 861.7 577.3 866.0 573.0M936.0 430.0C930.0 435.0 928.0 435.0 918.0 445.0C908.0 455.0 911.0 451.3 906.0 460.0C901.0 468.7 904.0 467.3 903.0 471.0M903.0 471.0C898.3 476.3 896.3 475.7 889.0 487.0C881.7 498.3 884.3 494.0 881.0 505.0C877.7 516.0 879.7 515.0 879.0 520.0M973.0 404.0C977.0 401.0 976.0 399.3 985.0 395.0C994.0 390.7 990.7 391.7 1000.0 391.0C1009.3 390.3 1008.7 392.3 1013.0 393.0M1013.0 393.0C1015.3 390.7 1013.7 388.3 1020.0 386.0C1026.3 383.7 1024.7 383.3 1032.0 386.0C1039.3 388.7 1037.0 388.0 1042.0 394.0C1047.0 400.0 1045.3 400.7 1047.0 404.0M1045.0 403.0C1049.6 414.5 1047.8 415.7 1058.8 437.5C1069.8 459.3 1063.9 448.3 1078.0 468.5C1092.1 488.7 1078.0 476.2 1101.0 498.0C1124.0 519.8 1131.7 522.0 1147.0 534.0M1003.0 381.0C1006.0 386.0 1000.3 376.3 1012.0 396.0C1023.7 415.7 1015.3 410.3 1038.0 440.0C1060.7 469.7 1047.7 454.7 1080.0 485.0C1112.3 515.3 1116.7 515.7 1135.0 531.0M973.0 404.0C983.0 416.0 977.3 412.3 1003.0 440.0C1028.7 467.7 1012.7 455.0 1050.0 487.0C1087.3 519.0 1093.3 519.7 1115.0 536.0M936.0 430.0C955.8 446.2 953.5 444.2 995.5 478.5C1037.5 512.8 1027.8 509.2 1062.0 533.0C1096.2 556.8 1086.0 544.3 1098.0 550.0M903.0 471.0C925.7 484.0 928.0 484.0 971.0 510.0C1014.0 536.0 995.3 529.0 1032.0 549.0C1068.7 569.0 1064.7 563.0 1081.0 570.0M879.0 520.0C899.7 527.3 900.2 525.7 941.0 542.0C981.8 558.3 958.8 551.7 1001.5 569.0C1044.2 586.3 1046.5 585.7 1069.0 594.0M866.0 573.0C909.0 581.3 929.3 582.7 995.0 598.0C1060.7 613.3 1040.3 612.0 1063.0 619.0M973.0 404.0C983.3 415.4 977.9 411.2 1003.8 438.3C1029.7 465.4 1013.5 453.3 1050.8 485.3C1088.1 517.3 1094.1 518.0 1115.8 534.3M936.0 430.0C956.1 445.6 954.0 443.0 996.3 476.8C1038.6 510.6 1028.6 507.5 1062.8 531.3C1097.0 555.1 1086.8 542.6 1098.8 548.3M903.0 471.0C925.9 483.4 928.5 482.9 971.8 508.3C1015.1 533.7 996.1 527.3 1032.8 547.3C1069.5 567.3 1065.5 561.3 1081.8 568.3M879.0 520.0C899.9 526.8 900.7 524.5 941.8 540.3C982.9 556.1 959.6 550.0 1002.3 567.3C1045.0 584.6 1047.3 584.0 1069.8 592.3M866.0 573.0C909.3 580.8 929.9 581.5 995.8 596.3C1061.7 611.1 1041.1 610.3 1063.8 617.3M1153.0 538.0Q1145.3 531.0 1135.0 532.0M1153.0 538.0Q1142.7 539.0 1135.0 532.0M1135.0 532.0Q1124.4 530.3 1116.0 537.0M1135.0 532.0Q1126.6 538.7 1116.0 537.0M1116.0 537.0Q1104.1 539.5 1098.0 550.0M1116.0 537.0Q1109.9 547.5 1098.0 550.0M1098.0 550.0Q1085.1 556.3 1081.0 570.0M1098.0 550.0Q1093.9 563.7 1081.0 570.0M1081.0 570.0Q1069.7 579.4 1069.0 594.0M1081.0 570.0Q1080.3 584.6 1069.0 594.0M1069.0 594.0Q1060.5 605.2 1063.0 619.0M1069.0 594.0Q1071.5 607.8 1063.0 619.0M1063.0 619.0Q1057.5 631.5 1063.0 644.0M1063.0 619.0Q1068.5 631.5 1063.0 644.0M1116.0 537.0L1135.0 548.0M1098.0 550.0L1123.0 562.0M1081.0 570.0L1107.0 582.0M1069.0 594.0L1095.0 605.0M1063.0 619.0L1089.0 630.0M1135.0 532.0L1146.0 541.0M510.0 477.0C511.7 481.7 510.0 483.7 515.0 491.0C520.0 498.3 517.3 494.3 525.0 499.0C532.7 503.7 521.3 497.3 538.0 505.0C554.7 512.7 506.0 492.8 575.0 522.0C644.0 551.2 671.7 561.5 745.0 592.5C818.3 623.5 768.3 605.2 795.0 615.0C821.7 624.8 808.3 619.3 825.0 622.0C841.7 624.7 825.0 623.1 845.0 623.0C865.0 622.9 858.3 621.9 885.0 621.6C911.7 621.3 905.0 621.9 925.0 622.0C945.0 622.1 921.7 620.0 945.0 622.0C968.3 624.0 955.7 620.7 995.0 628.0C1034.3 635.3 1032.7 635.0 1063.0 644.0C1093.3 653.0 1078.3 651.3 1086.0 655.0M510.0 477.0L504.0 481.5M538.0 505.0L534.0 511.0M847.0 623.0L846.0 627.5M633.0 433.0C632.8 427.3 632.2 427.3 632.5 416.0C632.8 404.7 633.5 404.7 634.0 399.0M633.0 433.0C634.3 428.3 633.0 428.3 637.0 419.0C641.0 409.7 639.3 412.3 645.0 405.0C650.7 397.7 651.0 399.7 654.0 397.0M633.0 433.0C635.0 428.3 633.7 428.0 639.0 419.0C644.3 410.0 642.0 412.7 649.0 406.0C656.0 399.3 656.3 401.3 660.0 399.0M633.0 433.0C636.0 426.7 633.7 425.0 642.0 414.0C650.3 403.0 645.3 408.7 658.0 400.0C670.7 391.3 664.7 396.0 680.0 388.0C695.3 380.0 690.7 382.3 704.0 376.0C717.3 369.7 712.7 371.3 720.0 369.0C727.3 366.7 722.7 367.7 726.0 369.0C729.3 370.3 728.7 371.7 730.0 373.0M633.0 433.0C638.0 428.0 636.3 426.0 648.0 418.0C659.7 410.0 652.7 414.7 668.0 409.0C683.3 403.3 679.3 407.3 694.0 401.0C708.7 394.7 702.0 398.3 712.0 390.0C722.0 381.7 718.0 381.7 724.0 376.0C730.0 370.3 728.0 374.0 730.0 373.0M660.0 399.0C668.3 395.7 668.0 397.0 685.0 389.0C702.0 381.0 698.3 382.3 711.0 375.0C723.7 367.7 719.0 369.7 723.0 367.0M679.8 452.8C679.6 447.1 679.0 447.1 679.3 435.8C679.6 424.5 680.3 424.5 680.8 418.8M679.8 452.8C681.1 448.1 679.8 448.1 683.8 438.8C687.8 429.5 686.1 432.1 691.8 424.8C697.5 417.5 697.8 419.5 700.8 416.8M679.8 452.8C681.8 448.1 680.5 447.8 685.8 438.8C691.1 429.8 688.8 432.5 695.8 425.8C702.8 419.1 703.1 421.1 706.8 418.8M679.8 452.8C682.8 446.5 680.5 444.8 688.8 433.8C697.1 422.8 692.1 428.5 704.8 419.8C717.5 411.1 711.5 415.8 726.8 407.8C742.1 399.8 737.5 402.1 750.8 395.8C764.1 389.5 759.5 391.1 766.8 388.8C774.1 386.5 769.5 387.5 772.8 388.8C776.1 390.1 775.5 391.5 776.8 392.8M679.8 452.8C684.8 447.8 683.1 445.8 694.8 437.8C706.5 429.8 699.5 434.5 714.8 428.8C730.1 423.1 726.1 427.1 740.8 420.8C755.5 414.5 748.8 418.1 758.8 409.8C768.8 401.5 764.8 401.5 770.8 395.8C776.8 390.1 774.8 393.8 776.8 392.8M706.8 418.8C715.1 415.5 714.8 416.8 731.8 408.8C748.8 400.8 745.1 402.1 757.8 394.8C770.5 387.5 765.8 389.5 769.8 386.8M726.0 472.0C725.8 466.3 725.2 466.3 725.5 455.0C725.8 443.7 726.5 443.7 727.0 438.0M726.0 472.0C727.3 467.3 726.0 467.3 730.0 458.0C734.0 448.7 732.3 451.3 738.0 444.0C743.7 436.7 744.0 438.7 747.0 436.0M726.0 472.0C728.0 467.3 726.7 467.0 732.0 458.0C737.3 449.0 735.0 451.7 742.0 445.0C749.0 438.3 749.3 440.3 753.0 438.0M726.0 472.0C729.0 465.7 726.7 464.0 735.0 453.0C743.3 442.0 738.3 447.7 751.0 439.0C763.7 430.3 757.7 435.0 773.0 427.0C788.3 419.0 783.7 421.3 797.0 415.0C810.3 408.7 805.7 410.3 813.0 408.0C820.3 405.7 815.7 406.7 819.0 408.0C822.3 409.3 821.7 410.7 823.0 412.0M726.0 472.0C731.0 467.0 729.3 465.0 741.0 457.0C752.7 449.0 745.7 453.7 761.0 448.0C776.3 442.3 772.3 446.3 787.0 440.0C801.7 433.7 795.0 437.3 805.0 429.0C815.0 420.7 811.0 420.7 817.0 415.0C823.0 409.3 821.0 413.0 823.0 412.0M753.0 438.0C761.3 434.7 761.0 436.0 778.0 428.0C795.0 420.0 791.3 421.3 804.0 414.0C816.7 406.7 812.0 408.7 816.0 406.0M634.0 399.0C638.0 397.7 638.0 396.0 646.0 395.0C654.0 394.0 651.0 392.0 658.0 396.0C665.0 400.0 661.7 400.7 667.0 407.0C672.3 413.3 669.4 411.1 674.0 415.0C678.6 418.9 674.5 418.9 680.8 418.8C687.1 418.7 684.8 415.8 692.8 414.8C700.8 413.8 697.8 411.8 704.8 415.8C711.8 419.8 708.5 420.5 713.8 426.8C719.1 433.1 716.4 431.1 720.8 434.8C725.2 438.5 720.9 438.3 727.0 438.0C733.1 437.7 731.0 435.0 739.0 434.0C747.0 433.0 744.0 431.0 751.0 435.0C758.0 439.0 754.7 439.7 760.0 446.0C765.3 452.3 760.3 452.7 767.0 454.0C773.7 455.3 772.3 448.7 780.0 450.0C787.7 451.3 782.7 455.3 790.0 458.0C797.3 460.7 795.3 460.0 802.0 458.0C808.7 456.0 807.3 454.0 810.0 452.0M663.0 383.0C667.0 385.0 667.7 383.7 675.0 389.0C682.3 394.3 677.7 394.7 685.0 399.0C692.3 403.3 689.7 402.7 697.0 402.0C704.3 401.3 702.7 396.7 707.0 397.0C711.3 397.3 704.9 398.9 709.8 402.8C714.7 406.7 714.5 403.5 721.8 408.8C729.1 414.1 724.5 414.5 731.8 418.8C739.1 423.1 736.5 422.5 743.8 421.8C751.1 421.1 749.7 416.7 753.8 416.8C757.9 416.9 751.3 418.3 756.0 422.0C760.7 425.7 760.7 422.7 768.0 428.0C775.3 433.3 770.7 433.7 778.0 438.0C785.3 442.3 782.7 441.7 790.0 441.0C797.3 440.3 796.7 437.7 800.0 436.0M626.0 330.0C622.3 337.3 619.7 338.7 615.0 352.0C610.3 365.3 611.0 358.0 612.0 370.0C613.0 382.0 610.7 378.3 618.0 388.0C625.3 397.7 624.7 395.0 634.0 399.0C643.3 403.0 638.0 401.0 646.0 400.0C654.0 399.0 654.0 397.3 658.0 396.0M612.0 370.0L696.0 330.0M648.0 330.0L652.0 347.0M695.0 362.0C698.0 361.0 696.3 362.3 704.0 359.0C711.7 355.7 711.3 358.3 718.0 352.0C724.7 345.7 721.7 349.3 724.0 340.0C726.3 330.7 724.7 329.3 725.0 324.0M808.0 440.0C802.0 443.3 802.7 442.7 790.0 450.0C777.3 457.3 781.3 452.7 770.0 462.0C758.7 471.3 763.3 467.0 756.0 478.0C748.7 489.0 751.7 483.3 748.0 495.0C744.3 506.7 746.2 501.0 745.0 513.0C743.8 525.0 744.5 515.3 744.5 531.0C744.5 546.7 744.2 539.0 745.0 560.0C745.8 581.0 746.3 582.7 747.0 594.0M794.0 458.0C794.0 456.0 792.0 456.7 794.0 452.0C796.0 447.3 794.7 448.7 800.0 444.0C805.3 439.3 802.0 440.0 810.0 438.0C818.0 436.0 816.7 436.0 824.0 438.0C831.3 440.0 829.3 442.0 832.0 444.0M794.0 458.0C796.0 460.7 795.3 462.0 800.0 466.0C804.7 470.0 805.3 468.7 808.0 470.0M834.0 414.0C833.0 423.3 842.3 419.0 831.0 442.0C819.7 465.0 820.7 456.0 800.0 483.0C779.3 510.0 782.0 506.3 769.0 523.0C756.0 539.7 767.0 530.3 761.0 533.0C755.0 535.7 754.3 531.7 751.0 531.0" fill="none" stroke="#001c1c" stroke-width="1" stroke-opacity="0.9"/>
</g>
</svg>

<svg class="abs" style="left:0;top:0" width="1257" height="42" viewBox="0 0 1257 42">
<g transform="translate(12,11)" fill="none" stroke="#0fdca2" stroke-width="2.2">
<path d="M8.9 1.1H4.6A3.5 3.5 0 0 0 4.6 8.1H8.9M4.9 5.1L8.5 1.5"/>
<path d="M11.9 9.2V4.7A3.6 3.6 0 0 1 19.1 4.7V9.2"/>
<path d="M8.9 12.5H4.6A3.4 3.4 0 0 0 4.6 19.3H8.9"/>
<path d="M19.1 11.4V15.8A3.5 3.5 0 0 1 15.6 19.3H11.2M11.9 12.3L15.9 16.3"/>
</g>
<g fill="#fff"><rect x="58" y="15" width="14" height="2"/><rect x="58" y="20" width="14" height="2"/><rect x="58" y="25" width="14" height="2"/></g>
<!-- new file -->
<path d="M100.7 12.5H108.4V19.3H115.2V28.9H100.7Z" fill="#e4e4e4"/><path d="M109.4 13L114.8 18.4H109.4Z" fill="#ececec"/>
<!-- open -->
<path d="M141.3 13.2H146.5L147.5 15.1H157.5V18.4H144.4L141.8 27H141.3Z" fill="#d6d6d6"/><path d="M144.8 19.4H160.3L157.5 28.4H142.3Z" fill="#e6e6e6"/>
<!-- save -->
<path d="M185.8 12.5H199.5L202.4 15.4V28.9H185.8Z" fill="#e4e4e4"/><path d="M189.3 12.5V16.6H198.2V12.5" fill="none" stroke="#2e2e30" stroke-width="0.8"/><rect x="188.5" y="20.2" width="11.5" height="8.7" fill="#2e2e30"/><rect x="191" y="22" width="7" height="5.4" fill="#8c8c8c"/>
<!-- window controls -->
<g fill="none" stroke="#f0f0f0" stroke-width="1.2">
<path d="M1098 16.5L1105 23.5L1112 16.5"/>
<path d="M1142.5 21.3H1154"/>
<rect x="1185.5" y="15.5" width="11" height="11" rx="1"/>
<path d="M1229 15.8L1239 25.8M1239 15.8L1229 25.8"/>
</g>
</svg>
<div id="proj"><span>New project</span>
<svg class="abs" style="left:160px;top:9px" width="14" height="13" viewBox="0 0 14 13"><rect x="2.4" y="2.5" width="9.3" height="6.4" rx="1.8" fill="none" stroke="#dcdcdc" stroke-width="1.3"/><rect x="1.8" y="10.2" width="10.5" height="1.1" fill="#dcdcdc"/></svg>
</div>
<div class="sep" style="left:217px;top:8px;width:1px;height:26px"></div>



<div class="panel" style="left:8px;top:48px;width:367px;height:259px">
  <div class="tab sel" style="left:5px;width:117px">Model</div>
  <div class="tab" style="left:125px;width:117px">Machining</div>
  <div class="tab" style="left:245px;width:117px">Simulation</div>
  <div class="inner" style="left:5px;top:44px;width:357px;height:210px"></div>
</div>

<svg class="abs" style="left:18px;top:94px" width="150" height="36" viewBox="18 94 150 36">
<rect x="26.4" y="105.3" width="15.5" height="13.4" fill="none" stroke="#fff" stroke-width="1.1"/>
<g fill="#272729" stroke="#fff" stroke-width="1.1"><rect x="24.5" y="103.4" width="3.8" height="3.8"/><rect x="24.5" y="116.8" width="3.8" height="3.8"/><rect x="40" y="116.8" width="3.8" height="3.8"/></g>
<path d="M30 116.3L31 112.6L40.3 103.2A1.9 1.9 0 0 1 43 103.2L43.6 103.8A1.9 1.9 0 0 1 43.6 106.5L33.8 115.4Z" fill="#14b48e" stroke="#272729" stroke-width="0.8"/>
<path d="M39.5 104.3L42.6 107.3" stroke="#0b7d62" stroke-width="0.9"/>
<path d="M68.7 102.1L78.9 107.1L68.7 111.9L59.2 107.1Z" fill="#fdfdfd"/><path d="M59.2 107.1L68.7 111.9V122L59.2 116.7Z" fill="#e2e2e2"/><path d="M78.9 107.1L68.7 111.9V122L78.9 116.7Z" fill="#c6c6c6"/>
<circle cx="78.6" cy="107.9" r="4.4" fill="#272729"/><path d="M78.6 104.6V111.2M75.3 107.9H81.9" stroke="#12d6a4" stroke-width="1.1"/><g fill="#12d6a4"><rect x="76.2" y="105.5" width="1.2" height="1.2"/><rect x="79.8" y="105.5" width="1.2" height="1.2"/><rect x="76.2" y="109.1" width="1.2" height="1.2"/><rect x="79.8" y="109.1" width="1.2" height="1.2"/></g>
<path d="M94.4 121.7L102.7 102.6H107.5L115.3 121.7H110.4L108.9 118H101L99.5 121.7ZM102.4 114.6H107.5L105 107.6Z" fill="#d2d2d2" fill-rule="evenodd"/>
<rect x="129.9" y="105.3" width="22" height="15.5" rx="1.6" fill="#dcdcdc"/><rect x="129.4" y="102.6" width="11.4" height="4.2" rx="2" fill="#272729"/><rect x="130" y="103" width="10" height="3" rx="1.5" fill="#14c6a0"/>
<path d="M140.9 109.6V116.6M137.4 113.1H144.4" stroke="#1e1e1e" stroke-width="1.7"/>
</svg>
<div class="abs" style="left:300px;top:105px;font-size:12.5px;font-weight:bold;line-height:16px;color:#f4f4f4">Import</div>
<svg class="abs" style="left:351px;top:109px" width="10" height="6" viewBox="0 0 10 6"><path d="M0.8 0.8H9.6L5.2 5.4Z" fill="#f0f0f0"/></svg>
<div class="abs" style="left:27px;top:186px;width:331px;height:22px;background:#000"></div>
<div class="cb" style="left:32px;top:146px"><svg width="13" height="13" viewBox="0 0 13 13"><path d="M2.9 6.7L5.7 9L10.5 4.3" fill="none" stroke="#fff" stroke-width="1.7"/></svg></div>
<svg class="abs" style="left:49.5px;top:146.3px" width="13.4" height="13" viewBox="0 0 14 13" preserveAspectRatio="none"><rect x="1.2" y="0.8" width="6.8" height="3.2" rx="1" fill="#c9c9c9"/><rect x="0.5" y="3.2" width="13.1" height="9" rx="0.8" fill="#fbe796"/><rect x="0.5" y="11.2" width="13.1" height="1" fill="#e6c862"/></svg>
<div class="row" style="left:67.2px;top:142px">Full Model</div>
<div class="cb" style="left:43px;top:168px"><svg width="13" height="13" viewBox="0 0 13 13"><path d="M2.9 6.7L5.7 9L10.5 4.3" fill="none" stroke="#fff" stroke-width="1.7"/></svg></div>
<svg class="abs" style="left:60.2px;top:168.3px" width="13.4" height="13" viewBox="0 0 14 13" preserveAspectRatio="none"><rect x="1.2" y="0.8" width="6.8" height="3.2" rx="1" fill="#c9c9c9"/><rect x="0.5" y="3.2" width="13.1" height="9" rx="0.8" fill="#fbe796"/><rect x="0.5" y="11.2" width="13.1" height="1" fill="#e6c862"/></svg>
<div class="row" style="left:78.4px;top:164px">Part</div>
<div class="cb" style="left:43px;top:212px"><svg width="13" height="13" viewBox="0 0 13 13"><path d="M2.9 6.7L5.7 9L10.5 4.3" fill="none" stroke="#fff" stroke-width="1.7"/></svg></div>
<svg class="abs" style="left:60.2px;top:212.3px" width="13.4" height="13" viewBox="0 0 14 13" preserveAspectRatio="none"><rect x="1.2" y="0.8" width="6.8" height="3.2" rx="1" fill="#c9c9c9"/><rect x="0.5" y="3.2" width="13.1" height="9" rx="0.8" fill="#fbe796"/><rect x="0.5" y="11.2" width="13.1" height="1" fill="#e6c862"/></svg>
<div class="row" style="left:78.4px;top:208px">Workpiece</div>
<div class="cb" style="left:43px;top:234px"><svg width="13" height="13" viewBox="0 0 13 13"><path d="M2.9 6.7L5.7 9L10.5 4.3" fill="none" stroke="#fff" stroke-width="1.7"/></svg></div>
<svg class="abs" style="left:60.2px;top:234.3px" width="13.4" height="13" viewBox="0 0 14 13" preserveAspectRatio="none"><rect x="1.2" y="0.8" width="6.8" height="3.2" rx="1" fill="#c9c9c9"/><rect x="0.5" y="3.2" width="13.1" height="9" rx="0.8" fill="#fbe796"/><rect x="0.5" y="11.2" width="13.1" height="1" fill="#e6c862"/></svg>
<div class="row" style="left:78.4px;top:230px">Fixtures</div>
<div class="cb" style="left:43px;top:256px"><svg width="13" height="13" viewBox="0 0 13 13"><path d="M2.9 6.7L5.7 9L10.5 4.3" fill="none" stroke="#fff" stroke-width="1.7"/></svg></div>
<svg class="abs" style="left:60.2px;top:256.3px" width="13.4" height="13" viewBox="0 0 14 13" preserveAspectRatio="none"><rect x="1.2" y="0.8" width="6.8" height="3.2" rx="1" fill="#c9c9c9"/><rect x="0.5" y="3.2" width="13.1" height="9" rx="0.8" fill="#fbe796"/><rect x="0.5" y="11.2" width="13.1" height="1" fill="#e6c862"/></svg>
<div class="row" style="left:78.4px;top:252px">Restrictions</div>
<svg class="abs" style="left:26px;top:170px" width="12" height="9" viewBox="0 0 12 9"><path d="M1.5 2.4L6.1 7L10.7 2.4" fill="none" stroke="#cfcfcf" stroke-width="1.3"/></svg>
<div class="cb" style="left:54px;top:190px"><svg width="13" height="13" viewBox="0 0 13 13"><path d="M2.9 6.7L5.7 9L10.5 4.3" fill="none" stroke="#fff" stroke-width="1.7"/></svg></div>
<svg class="abs" style="left:70px;top:189px" width="17" height="16" viewBox="0 0 17 16"><path d="M2 0.7H8.8L13 4.8V15H2Z" fill="#6fa898"/><path d="M8.8 0.7L13 4.8H8.8Z" fill="#9cc9bb"/><rect x="1.5" y="7.2" width="14.5" height="6.6" fill="#1c2a26" fill-opacity="0.75"/><text x="1.8" y="13.3" font-family="Liberation Sans,sans-serif" font-weight="bold" font-size="6.6" fill="#fff" textLength="13.6" lengthAdjust="spacingAndGlyphs">IGS</text></svg>
<div class="row" style="left:89.5px;top:186px;color:#2faf82;letter-spacing:-0.2px">BOTTIGL.IGS</div>

<div class="panel" style="left:8px;top:312px;width:367px;height:504px">
  <div class="inner" style="left:5px;top:5px;width:357px;height:495px"></div>
</div>

<div class="abs" style="left:13px;top:317px;width:45px;height:17px;background:#2e2e30;border-radius:4px 0 4px 0"></div><div class="abs" style="left:14px;top:319px;width:40px;height:11px;background:#1b1b15;border-radius:3px"></div>
<div class="abs" style="left:27.3px;top:338px;font-size:14px;font-weight:bold;line-height:20px;letter-spacing:-0.25px;color:#f4f4f4">BOTTIGL.IGS</div>
<svg class="abs" style="left:128px;top:336px" width="116" height="24" viewBox="128 336 116 24"><path d="M147.19 346.76L147.19 349.24L145.16 349.60L144.78 350.52L145.96 352.21L144.21 353.96L142.52 352.78L141.60 353.16L141.24 355.19L138.76 355.19L138.40 353.16L137.48 352.78L135.79 353.96L134.04 352.21L135.22 350.52L134.84 349.60L132.81 349.24L132.81 346.76L134.84 346.40L135.22 345.48L134.04 343.79L135.79 342.04L137.48 343.22L138.40 342.84L138.76 340.81L141.24 340.81L141.60 342.84L142.52 343.22L144.21 342.04L145.96 343.79L144.78 345.48L145.16 346.40Z M142.6 348A2.6 2.6 0 1 0 137.4 348A2.6 2.6 0 1 0 142.6 348Z" fill="#e6e6e6" fill-rule="evenodd"/>
<path d="M171.1 341C173.5 344.3 176.6 347 176.6 350.1A5.5 5.3 0 0 1 165.6 350.1C165.6 347 168.7 344.3 171.1 341Z" fill="#e6e6e6"/><path d="M168.2 350.2A2.9 2.9 0 0 0 170.6 353" fill="none" stroke="#272729" stroke-width="1.1"/>
<path d="M193 348.2C195.5 344.5 198.6 342.4 202.1 342.4C205.6 342.4 208.7 344.5 211.2 348.2C208.7 351.9 205.6 354 202.1 354C198.6 354 195.500 351.900 193 348.200Z" fill="#e6e6e6"/><circle cx="202.1" cy="348.2" r="3.6" fill="#272729"/><circle cx="202.1" cy="348.2" r="2.2" fill="#e6e6e6"/><path d="M202.1 348.2V346.4M202.1 348.2H203.8" stroke="#272729" stroke-width="0.9"/>
<path d="M228.4 343.8L237.8 353.3M237.8 343.8L228.4 353.3" stroke="#e6e6e6" stroke-width="1.3"/></svg>

<svg class="fi" style="left:28px;top:367px" viewBox="0 0 15 16.4"><path d="M7.8 0.8L13.8 5.7L9.2 15.4L1 8.4Z" fill="#1b6a5a" stroke="#237a66" stroke-width="0.6"/></svg><div class="face" style="left:45.3px;top:367px">Face2</div>
<svg class="fi" style="left:28px;top:384px" viewBox="0 0 15 16.4"><path d="M7.8 0.8L13.8 5.7L9.2 15.4L1 8.4Z" fill="#1b6a5a" stroke="#237a66" stroke-width="0.6"/></svg><div class="face" style="left:45.3px;top:384px">Face3</div>
<svg class="fi" style="left:28px;top:401px" viewBox="0 0 15 16.4"><path d="M7.8 0.8L13.8 5.7L9.2 15.4L1 8.4Z" fill="#1b6a5a" stroke="#237a66" stroke-width="0.6"/></svg><div class="face" style="left:45.3px;top:401px">Face4</div>
<svg class="fi" style="left:28px;top:418px" viewBox="0 0 15 16.4"><path d="M7.8 0.8L13.8 5.7L9.2 15.4L1 8.4Z" fill="#1b6a5a" stroke="#237a66" stroke-width="0.6"/></svg><div class="face" style="left:45.3px;top:418px">Face5</div>
<svg class="fi" style="left:28px;top:435px" viewBox="0 0 15 16.4"><path d="M7.8 0.8L13.8 5.7L9.2 15.4L1 8.4Z" fill="#1b6a5a" stroke="#237a66" stroke-width="0.6"/></svg><div class="face" style="left:45.3px;top:435px">Face6</div>
<svg class="fi" style="left:28px;top:452px" viewBox="0 0 15 16.4"><path d="M7.8 0.8L13.8 5.7L9.2 15.4L1 8.4Z" fill="#1b6a5a" stroke="#237a66" stroke-width="0.6"/></svg><div class="face" style="left:45.3px;top:452px">Face7</div>
<svg class="fi" style="left:28px;top:469px" viewBox="0 0 15 16.4"><path d="M7.8 0.8L13.8 5.7L9.2 15.4L1 8.4Z" fill="#1b6a5a" stroke="#237a66" stroke-width="0.6"/></svg><div class="face" style="left:45.3px;top:469px">Face8</div>
<svg class="fi" style="left:28px;top:486px" viewBox="0 0 15 16.4"><path d="M7.8 0.8L13.8 5.7L9.2 15.4L1 8.4Z" fill="#1b6a5a" stroke="#237a66" stroke-width="0.6"/></svg><div class="face" style="left:45.3px;top:486px">Face9</div>
<svg class="fi" style="left:28px;top:503px" viewBox="0 0 15 16.4"><path d="M7.8 0.8L13.8 5.7L9.2 15.4L1 8.4Z" fill="#1b6a5a" stroke="#237a66" stroke-width="0.6"/></svg><div class="face" style="left:45.3px;top:503px">Face10</div>
<svg class="fi" style="left:28px;top:520px" viewBox="0 0 15 16.4"><path d="M7.8 0.8L13.8 5.7L9.2 15.4L1 8.4Z" fill="#1b6a5a" stroke="#237a66" stroke-width="0.6"/></svg><div class="face" style="left:45.3px;top:520px">Face11</div>
<svg class="fi" style="left:28px;top:537px" viewBox="0 0 15 16.4"><path d="M7.8 0.8L13.8 5.7L9.2 15.4L1 8.4Z" fill="#1b6a5a" stroke="#237a66" stroke-width="0.6"/></svg><div class="face" style="left:45.3px;top:537px">Face12</div>
<svg class="fi" style="left:28px;top:554px" viewBox="0 0 15 16.4"><path d="M7.8 0.8L13.8 5.7L9.2 15.4L1 8.4Z" fill="#1b6a5a" stroke="#237a66" stroke-width="0.6"/></svg><div class="face" style="left:45.3px;top:554px">Face13</div>
<svg class="fi" style="left:28px;top:571px" viewBox="0 0 15 16.4"><path d="M7.8 0.8L13.8 5.7L9.2 15.4L1 8.4Z" fill="#1b6a5a" stroke="#237a66" stroke-width="0.6"/></svg><div class="face" style="left:45.3px;top:571px">Face14</div>
<svg class="fi" style="left:28px;top:588px" viewBox="0 0 15 16.4"><path d="M7.8 0.8L13.8 5.7L9.2 15.4L1 8.4Z" fill="#1b6a5a" stroke="#237a66" stroke-width="0.6"/></svg><div class="face" style="left:45.3px;top:588px">Face15</div>
<svg class="fi" style="left:28px;top:605px" viewBox="0 0 15 16.4"><path d="M7.8 0.8L13.8 5.7L9.2 15.4L1 8.4Z" fill="#1b6a5a" stroke="#237a66" stroke-width="0.6"/></svg><div class="face" style="left:45.3px;top:605px">Face16</div>
<svg class="fi" style="left:28px;top:622px" viewBox="0 0 15 16.4"><path d="M7.8 0.8L13.8 5.7L9.2 15.4L1 8.4Z" fill="#1b6a5a" stroke="#237a66" stroke-width="0.6"/></svg><div class="face" style="left:45.3px;top:622px">Face17</div>
<svg class="fi" style="left:28px;top:639px" viewBox="0 0 15 16.4"><path d="M7.8 0.8L13.8 5.7L9.2 15.4L1 8.4Z" fill="#1b6a5a" stroke="#237a66" stroke-width="0.6"/></svg><div class="face" style="left:45.3px;top:639px">Face18</div>
<svg class="fi" style="left:28px;top:656px" viewBox="0 0 15 16.4"><path d="M7.8 0.8L13.8 5.7L9.2 15.4L1 8.4Z" fill="#1b6a5a" stroke="#237a66" stroke-width="0.6"/></svg><div class="face" style="left:45.3px;top:656px">Face19</div>
<svg class="fi" style="left:28px;top:673px" viewBox="0 0 15 16.4"><path d="M7.8 0.8L13.8 5.7L9.2 15.4L1 8.4Z" fill="#1b6a5a" stroke="#237a66" stroke-width="0.6"/></svg><div class="face" style="left:45.3px;top:673px">Face20</div>
<svg class="fi" style="left:28px;top:690px" viewBox="0 0 15 16.4"><path d="M7.8 0.8L13.8 5.7L9.2 15.4L1 8.4Z" fill="#1b6a5a" stroke="#237a66" stroke-width="0.6"/></svg><div class="face" style="left:45.3px;top:690px">Face21</div>
<svg class="fi" style="left:28px;top:707px" viewBox="0 0 15 16.4"><path d="M7.8 0.8L13.8 5.7L9.2 15.4L1 8.4Z" fill="#1b6a5a" stroke="#237a66" stroke-width="0.6"/></svg><div class="face" style="left:45.3px;top:707px">Face22</div>
<svg class="fi" style="left:28px;top:724px" viewBox="0 0 15 16.4"><path d="M7.8 0.8L13.8 5.7L9.2 15.4L1 8.4Z" fill="#1b6a5a" stroke="#237a66" stroke-width="0.6"/></svg><div class="face" style="left:45.3px;top:724px">Face23</div>
<svg class="fi" style="left:28px;top:741px" viewBox="0 0 15 16.4"><path d="M7.8 0.8L13.8 5.7L9.2 15.4L1 8.4Z" fill="#1b6a5a" stroke="#237a66" stroke-width="0.6"/></svg><div class="face" style="left:45.3px;top:741px">Face24</div>
<svg class="fi" style="left:28px;top:758px" viewBox="0 0 15 16.4"><path d="M7.8 0.8L13.8 5.7L9.2 15.4L1 8.4Z" fill="#1b6a5a" stroke="#237a66" stroke-width="0.6"/></svg><div class="face" style="left:45.3px;top:758px">Face25</div>
<svg class="fi" style="left:28px;top:775px" viewBox="0 0 15 16.4"><path d="M7.8 0.8L13.8 5.7L9.2 15.4L1 8.4Z" fill="#1b6a5a" stroke="#237a66" stroke-width="0.6"/></svg><div class="face" style="left:45.3px;top:775px">Face26</div>
<svg class="fi" style="left:156px;top:367px" viewBox="0 0 15 16.4"><path d="M7.8 0.8L13.8 5.7L9.2 15.4L1 8.4Z" fill="#1b6a5a" stroke="#237a66" stroke-width="0.6"/></svg><div class="face" style="left:173.3px;top:367px">Face27</div>
<svg class="fi" style="left:156px;top:384px" viewBox="0 0 15 16.4"><path d="M7.8 0.8L13.8 5.7L9.2 15.4L1 8.4Z" fill="#1b6a5a" stroke="#237a66" stroke-width="0.6"/></svg><div class="face" style="left:173.3px;top:384px">Face28</div>
<svg class="fi" style="left:156px;top:401px" viewBox="0 0 15 16.4"><path d="M7.8 0.8L13.8 5.7L9.2 15.4L1 8.4Z" fill="#1b6a5a" stroke="#237a66" stroke-width="0.6"/></svg><div class="face" style="left:173.3px;top:401px">Face29</div>
<svg class="fi" style="left:156px;top:418px" viewBox="0 0 15 16.4"><path d="M7.8 0.8L13.8 5.7L9.2 15.4L1 8.4Z" fill="#1b6a5a" stroke="#237a66" stroke-width="0.6"/></svg><div class="face" style="left:173.3px;top:418px">Face30</div>
<svg class="fi" style="left:156px;top:435px" viewBox="0 0 15 16.4"><path d="M7.8 0.8L13.8 5.7L9.2 15.4L1 8.4Z" fill="#1b6a5a" stroke="#237a66" stroke-width="0.6"/></svg><div class="face" style="left:173.3px;top:435px">Face31</div>
<svg class="fi" style="left:156px;top:452px" viewBox="0 0 15 16.4"><path d="M7.8 0.8L13.8 5.7L9.2 15.4L1 8.4Z" fill="#1b6a5a" stroke="#237a66" stroke-width="0.6"/></svg><div class="face" style="left:173.3px;top:452px">Face32</div>
<svg class="fi" style="left:156px;top:469px" viewBox="0 0 15 16.4"><path d="M7.8 0.8L13.8 5.7L9.2 15.4L1 8.4Z" fill="#1b6a5a" stroke="#237a66" stroke-width="0.6"/></svg><div class="face" style="left:173.3px;top:469px">Face33</div>
<svg class="fi" style="left:156px;top:486px" viewBox="0 0 15 16.4"><path d="M7.8 0.8L13.8 5.7L9.2 15.4L1 8.4Z" fill="#1b6a5a" stroke="#237a66" stroke-width="0.6"/></svg><div class="face" style="left:173.3px;top:486px">Face34</div>
<svg class="fi" style="left:156px;top:503px" viewBox="0 0 15 16.4"><path d="M7.8 0.8L13.8 5.7L9.2 15.4L1 8.4Z" fill="#1b6a5a" stroke="#237a66" stroke-width="0.6"/></svg><div class="face" style="left:173.3px;top:503px">Face35</div>
<svg class="fi" style="left:156px;top:520px" viewBox="0 0 15 16.4"><path d="M7.8 0.8L13.8 5.7L9.2 15.4L1 8.4Z" fill="#1b6a5a" stroke="#237a66" stroke-width="0.6"/></svg><div class="face" style="left:173.3px;top:520px">Face36</div>
<svg class="fi" style="left:156px;top:537px" viewBox="0 0 15 16.4"><path d="M7.8 0.8L13.8 5.7L9.2 15.4L1 8.4Z" fill="#1b6a5a" stroke="#237a66" stroke-width="0.6"/></svg><div class="face" style="left:173.3px;top:537px">Face37</div>
<svg class="fi" style="left:156px;top:554px" viewBox="0 0 15 16.4"><path d="M7.8 0.8L13.8 5.7L9.2 15.4L1 8.4Z" fill="#1b6a5a" stroke="#237a66" stroke-width="0.6"/></svg><div class="face" style="left:173.3px;top:554px">Face38</div>
<svg class="fi" style="left:156px;top:571px" viewBox="0 0 15 16.4"><path d="M7.8 0.8L13.8 5.7L9.2 15.4L1 8.4Z" fill="#1b6a5a" stroke="#237a66" stroke-width="0.6"/></svg><div class="face" style="left:173.3px;top:571px">Face39</div>
<svg class="fi" style="left:156px;top:588px" viewBox="0 0 15 16.4"><path d="M7.8 0.8L13.8 5.7L9.2 15.4L1 8.4Z" fill="#1b6a5a" stroke="#237a66" stroke-width="0.6"/></svg><div class="face" style="left:173.3px;top:588px">Face40</div>
<svg class="fi" style="left:156px;top:605px" viewBox="0 0 15 16.4"><path d="M7.8 0.8L13.8 5.7L9.2 15.4L1 8.4Z" fill="#1b6a5a" stroke="#237a66" stroke-width="0.6"/></svg><div class="face" style="left:173.3px;top:605px">Face41</div>
<svg class="fi" style="left:156px;top:622px" viewBox="0 0 15 16.4"><path d="M7.8 0.8L13.8 5.7L9.2 15.4L1 8.4Z" fill="#1b6a5a" stroke="#237a66" stroke-width="0.6"/></svg><div class="face" style="left:173.3px;top:622px">Face42</div>
<svg class="fi" style="left:156px;top:639px" viewBox="0 0 15 16.4"><path d="M7.8 0.8L13.8 5.7L9.2 15.4L1 8.4Z" fill="#1b6a5a" stroke="#237a66" stroke-width="0.6"/></svg><div class="face" style="left:173.3px;top:639px">Face43</div>
<svg class="fi" style="left:156px;top:656px" viewBox="0 0 15 16.4"><path d="M7.8 0.8L13.8 5.7L9.2 15.4L1 8.4Z" fill="#1b6a5a" stroke="#237a66" stroke-width="0.6"/></svg><div class="face" style="left:173.3px;top:656px">Face44</div>
<svg class="fi" style="left:156px;top:673px" viewBox="0 0 15 16.4"><path d="M7.8 0.8L13.8 5.7L9.2 15.4L1 8.4Z" fill="#1b6a5a" stroke="#237a66" stroke-width="0.6"/></svg><div class="face" style="left:173.3px;top:673px">Face45</div>
<svg class="fi" style="left:156px;top:690px" viewBox="0 0 15 16.4"><path d="M7.8 0.8L13.8 5.7L9.2 15.4L1 8.4Z" fill="#1b6a5a" stroke="#237a66" stroke-width="0.6"/></svg><div class="face" style="left:173.3px;top:690px">Face46</div>
<svg class="fi" style="left:156px;top:707px" viewBox="0 0 15 16.4"><path d="M7.8 0.8L13.8 5.7L9.2 15.4L1 8.4Z" fill="#1b6a5a" stroke="#237a66" stroke-width="0.6"/></svg><div class="face" style="left:173.3px;top:707px">Face47</div>
<svg class="fi" style="left:156px;top:724px" viewBox="0 0 15 16.4"><path d="M7.8 0.8L13.8 5.7L9.2 15.4L1 8.4Z" fill="#1b6a5a" stroke="#237a66" stroke-width="0.6"/></svg><div class="face" style="left:173.3px;top:724px">Face48</div>
<svg class="fi" style="left:156px;top:741px" viewBox="0 0 15 16.4"><path d="M7.8 0.8L13.8 5.7L9.2 15.4L1 8.4Z" fill="#1b6a5a" stroke="#237a66" stroke-width="0.6"/></svg><div class="face" style="left:173.3px;top:741px">Face49</div>
<svg class="fi" style="left:156px;top:758px" viewBox="0 0 15 16.4"><path d="M7.8 0.8L13.8 5.7L9.2 15.4L1 8.4Z" fill="#1b6a5a" stroke="#237a66" stroke-width="0.6"/></svg><div class="face" style="left:173.3px;top:758px">Face50</div>
<svg class="fi" style="left:156px;top:775px" viewBox="0 0 15 16.4"><path d="M7.8 0.8L13.8 5.7L9.2 15.4L1 8.4Z" fill="#1b6a5a" stroke="#237a66" stroke-width="0.6"/></svg><div class="face" style="left:173.3px;top:775px">Face51</div>
<svg class="fi" style="left:284px;top:367px" viewBox="0 0 15 16.4"><path d="M7.8 0.8L13.8 5.7L9.2 15.4L1 8.4Z" fill="#1b6a5a" stroke="#237a66" stroke-width="0.6"/></svg><div class="face" style="left:301.3px;top:367px">Face52</div>
<svg class="fi" style="left:284px;top:384px" viewBox="0 0 15 16.4"><path d="M7.8 0.8L13.8 5.7L9.2 15.4L1 8.4Z" fill="#1b6a5a" stroke="#237a66" stroke-width="0.6"/></svg><div class="face" style="left:301.3px;top:384px">Face53</div>
<svg class="fi" style="left:284px;top:401px" viewBox="0 0 15 16.4"><path d="M7.8 0.8L13.8 5.7L9.2 15.4L1 8.4Z" fill="#1b6a5a" stroke="#237a66" stroke-width="0.6"/></svg><div class="face" style="left:301.3px;top:401px">Face54</div>
<svg class="fi" style="left:284px;top:418px" viewBox="0 0 15 16.4"><path d="M7.8 0.8L13.8 5.7L9.2 15.4L1 8.4Z" fill="#1b6a5a" stroke="#237a66" stroke-width="0.6"/></svg><div class="face" style="left:301.3px;top:418px">Face55</div>
<svg class="fi" style="left:284px;top:435px" viewBox="0 0 15 16.4"><path d="M7.8 0.8L13.8 5.7L9.2 15.4L1 8.4Z" fill="#1b6a5a" stroke="#237a66" stroke-width="0.6"/></svg><div class="face" style="left:301.3px;top:435px">Face56</div>
<svg class="fi" style="left:284px;top:452px" viewBox="0 0 15 16.4"><path d="M7.8 0.8L13.8 5.7L9.2 15.4L1 8.4Z" fill="#1b6a5a" stroke="#237a66" stroke-width="0.6"/></svg><div class="face" style="left:301.3px;top:452px">Face57</div>
<svg class="fi" style="left:284px;top:469px" viewBox="0 0 15 16.4"><path d="M7.8 0.8L13.8 5.7L9.2 15.4L1 8.4Z" fill="#1b6a5a" stroke="#237a66" stroke-width="0.6"/></svg><div class="face" style="left:301.3px;top:469px">Face58</div>
<svg class="fi" style="left:284px;top:486px" viewBox="0 0 15 16.4"><path d="M7.8 0.8L13.8 5.7L9.2 15.4L1 8.4Z" fill="#1b6a5a" stroke="#237a66" stroke-width="0.6"/></svg><div class="face" style="left:301.3px;top:486px">Face59</div>
<svg class="fi" style="left:284px;top:503px" viewBox="0 0 15 16.4"><path d="M7.8 0.8L13.8 5.7L9.2 15.4L1 8.4Z" fill="#1b6a5a" stroke="#237a66" stroke-width="0.6"/></svg><div class="face" style="left:301.3px;top:503px">Face60</div>
<svg class="fi" style="left:284px;top:520px" viewBox="0 0 15 16.4"><path d="M7.8 0.8L13.8 5.7L9.2 15.4L1 8.4Z" fill="#1b6a5a" stroke="#237a66" stroke-width="0.6"/></svg><div class="face" style="left:301.3px;top:520px">Face61</div>
<svg class="fi" style="left:284px;top:537px" viewBox="0 0 15 16.4"><path d="M7.8 0.8L13.8 5.7L9.2 15.4L1 8.4Z" fill="#1b6a5a" stroke="#237a66" stroke-width="0.6"/></svg><div class="face" style="left:301.3px;top:537px">Face62</div>
<svg class="fi" style="left:284px;top:554px" viewBox="0 0 15 16.4"><path d="M7.8 0.8L13.8 5.7L9.2 15.4L1 8.4Z" fill="#1b6a5a" stroke="#237a66" stroke-width="0.6"/></svg><div class="face" style="left:301.3px;top:554px">Face63</div>
<svg class="fi" style="left:284px;top:571px" viewBox="0 0 15 16.4"><path d="M7.8 0.8L13.8 5.7L9.2 15.4L1 8.4Z" fill="#1b6a5a" stroke="#237a66" stroke-width="0.6"/></svg><div class="face" style="left:301.3px;top:571px">Face64</div>
<svg class="fi" style="left:284px;top:588px" viewBox="0 0 15 16.4"><path d="M7.8 0.8L13.8 5.7L9.2 15.4L1 8.4Z" fill="#1b6a5a" stroke="#237a66" stroke-width="0.6"/></svg><div class="face" style="left:301.3px;top:588px">Face65</div>
<svg class="fi" style="left:284px;top:605px" viewBox="0 0 15 16.4"><path d="M7.8 0.8L13.8 5.7L9.2 15.4L1 8.4Z" fill="#1b6a5a" stroke="#237a66" stroke-width="0.6"/></svg><div class="face" style="left:301.3px;top:605px">Face66</div>
<svg class="fi" style="left:284px;top:622px" viewBox="0 0 15 16.4"><path d="M7.8 0.8L13.8 5.7L9.2 15.4L1 8.4Z" fill="#1b6a5a" stroke="#237a66" stroke-width="0.6"/></svg><div class="face" style="left:301.3px;top:622px">Face67</div>
<svg class="fi" style="left:284px;top:639px" viewBox="0 0 15 16.4"><path d="M7.8 0.8L13.8 5.7L9.2 15.4L1 8.4Z" fill="#1b6a5a" stroke="#237a66" stroke-width="0.6"/></svg><div class="face" style="left:301.3px;top:639px">Face68</div>
<svg class="fi" style="left:284px;top:656px" viewBox="0 0 15 16.4"><path d="M7.8 0.8L13.8 5.7L9.2 15.4L1 8.4Z" fill="#1b6a5a" stroke="#237a66" stroke-width="0.6"/></svg><div class="face" style="left:301.3px;top:656px">Face69</div>
<svg class="fi" style="left:284px;top:673px" viewBox="0 0 15 16.4"><path d="M7.8 0.8L13.8 5.7L9.2 15.4L1 8.4Z" fill="#1b6a5a" stroke="#237a66" stroke-width="0.6"/></svg><div class="face" style="left:301.3px;top:673px">Face70</div>
<svg class="fi" style="left:284px;top:690px" viewBox="0 0 15 16.4"><path d="M7.8 0.8L13.8 5.7L9.2 15.4L1 8.4Z" fill="#1b6a5a" stroke="#237a66" stroke-width="0.6"/></svg><div class="face" style="left:301.3px;top:690px">Face71</div>
<svg class="fi" style="left:284px;top:707px" viewBox="0 0 15 16.4"><path d="M7.8 0.8L13.8 5.7L9.2 15.4L1 8.4Z" fill="#1b6a5a" stroke="#237a66" stroke-width="0.6"/></svg><div class="face" style="left:301.3px;top:707px">Face72</div>
<svg class="fi" style="left:284px;top:724px" viewBox="0 0 15 16.4"><path d="M7.8 0.8L13.8 5.7L9.2 15.4L1 8.4Z" fill="#1b6a5a" stroke="#237a66" stroke-width="0.6"/></svg><div class="face" style="left:301.3px;top:724px">Face73</div>
<svg class="fi" style="left:284px;top:741px" viewBox="0 0 15 16.4"><path d="M7.8 0.8L13.8 5.7L9.2 15.4L1 8.4Z" fill="#1b6a5a" stroke="#237a66" stroke-width="0.6"/></svg><div class="face" style="left:301.3px;top:741px">Face74</div>
<svg class="fi" style="left:284px;top:758px" viewBox="0 0 15 16.4"><path d="M7.8 0.8L13.8 5.7L9.2 15.4L1 8.4Z" fill="#1b6a5a" stroke="#237a66" stroke-width="0.6"/></svg><div class="face" style="left:301.3px;top:758px">Face75</div>
<svg class="fi" style="left:284px;top:775px" viewBox="0 0 15 16.4"><path d="M7.8 0.8L13.8 5.7L9.2 15.4L1 8.4Z" fill="#1b6a5a" stroke="#237a66" stroke-width="0.6"/></svg><div class="face" style="left:301.3px;top:775px">Face76</div>
<div class="abs" style="left:27px;top:794px;width:331px;height:16px;background:#1a1a1a"></div><div class="abs" style="left:110px;top:793px;width:231px;height:2px;background:#0a0a0a"></div><div class="abs" style="left:44px;top:802px;width:66px;height:2px;background:#a8a8a8"></div>

<div id="vbar"></div>
<svg class="abs" style="left:382px;top:48px" width="38" height="596" viewBox="382 48 38 596">
<path d="M401 66L405.8 71H396.2Z" fill="#e2e2e2"/>
<circle cx="401" cy="102.7" r="14.4" fill="none" stroke="#13826a" stroke-width="1.15"/>
<g fill="none" stroke="#b4b4b4" stroke-width="1.1"><rect x="397" y="95.1" width="8" height="8"/><rect x="394.6" y="103.1" width="13" height="5"/><path d="M397 108.1V110.7H405V108.1"/></g>
<rect x="397.2" y="129.2" width="7.8" height="1.1" fill="#ececec"/><rect x="397" y="131.1" width="8.2" height="6" fill="#ececec"/><rect x="394.6" y="137.5" width="13" height="4.6" rx="0.6" fill="#ececec"/><rect x="397" y="143.0" width="8.2" height="1.5" fill="#ececec"/>
<rect x="397.2" y="163.2" width="7.8" height="1.1" fill="#12c8a0"/><rect x="397" y="165.1" width="8.2" height="6" fill="#12c8a0"/><rect x="394.6" y="171.5" width="13" height="4.6" rx="0.6" fill="#ececec"/><rect x="397" y="177.0" width="8.2" height="1.5" fill="#ececec"/>
<rect x="394.8" y="198" width="12.5" height="14.3" fill="#ececec"/>
<rect x="397.2" y="230.9" width="7.8" height="1.1" fill="#12c8a0"/><rect x="397" y="232.8" width="8.2" height="6" fill="#12c8a0"/><rect x="394.6" y="239.2" width="13" height="4.6" rx="0.6" fill="#12c8a0"/><rect x="397" y="244.7" width="8.2" height="1.5" fill="#12c8a0"/>
<rect x="397.2" y="265.3" width="8" height="2.2" fill="#ececec"/><rect x="395.8" y="268.3" width="10.9" height="4.6" rx="0.6" fill="#ececec"/><path d="M397.6 273.6H404.8L402.3 280.6H400.1Z" fill="#f2c62e"/>
<rect x="397.9" y="298.4" width="6.6" height="1.4" fill="#ececec"/><rect x="397.9" y="300.5" width="6.6" height="3.3" fill="#ececec"/><path d="M397.9 304.4H404.5V311.5L401.2 314.4L397.9 311.5Z" fill="#f2c62e"/><path d="M397.9 308.4L404.5 304.9M397.9 312L404.5 308.4" stroke="#2e2e30" stroke-width="1.2"/>
<path d="M393.2 348.5V341.5A7 7 0 0 1 398.2 335.4V348.5Z" fill="#f2c62e"/><path d="M399 348.5V339.6H403.2V342.6H405.2V348.5H408.6V341.5A7 7 0 0 0 403.6 335.4L403.2 337.6H399V348.5Z" fill="#ececec"/><path d="M399 335.5H403.5V339H399Z" fill="#ececec"/><circle cx="401.2" cy="336.3" r="1.9" fill="#fff" stroke="#2e2e30" stroke-width="0.8"/><rect x="400" y="343.6" width="4.4" height="1.8" fill="#2e2e30"/>
<path d="M395.2 367.6H406.2A1.3 1.3 0 0 1 407.5 368.9V380.7A1.3 1.3 0 0 1 406.2 382H394V378.6H403.6V371H395.2Z" fill="#ececec"/><rect x="394" y="372.6" width="5.6" height="3.6" fill="#ececec"/>
<g fill="none" stroke="#b8b8b8" stroke-width="1.5"><path d="M394.5 408L400.5 402.5"/><path d="M394.5 412.5C397 412.5 397.5 409 400 408C402.500 407 403 404 405.500 402.500"/><path d="M396 416C398.5 415.500 399 412.500 401.500 411.500C404 410.500 404.500 407.500 407.800 406"/><path d="M401 416.200L407.800 410.300"/></g>
<defs><linearGradient id="sepg" x1="0" x2="1" y1="0" y2="0"><stop offset="0" stop-color="#666" stop-opacity="0"/><stop offset="0.5" stop-color="#6a6a6a"/><stop offset="1" stop-color="#666" stop-opacity="0"/></linearGradient><linearGradient id="gg" x1="0" x2="1" y1="0" y2="0"><stop offset="0" stop-color="#17e6b6"/><stop offset="1" stop-color="#10b890"/></linearGradient><linearGradient id="gr" x1="0" x2="1" y1="0" y2="0"><stop offset="0" stop-color="#8a8a8a"/><stop offset="0.6" stop-color="#c4c4c4"/><stop offset="1" stop-color="#9a9a9a"/></linearGradient></defs>
<rect x="384" y="430.5" width="34" height="1" fill="url(#sepg)"/>
<circle cx="401" cy="454.0" r="14.7" fill="none" stroke="#13826a" stroke-width="1.15"/>
<circle cx="401" cy="488.0" r="14.7" fill="none" stroke="#13826a" stroke-width="1.15"/>
<circle cx="401" cy="521.7" r="14.7" fill="none" stroke="#13826a" stroke-width="1.15"/>
<circle cx="401" cy="555.9" r="14.7" fill="none" stroke="#13826a" stroke-width="1.15"/>
<circle cx="401" cy="590.2" r="14.7" fill="none" stroke="#13826a" stroke-width="1.15"/>
<circle cx="401" cy="624.2" r="14.7" fill="none" stroke="#13826a" stroke-width="1.15"/>
<circle cx="401" cy="454" r="3.8" fill="#14e2b2"/>
<path d="M394.2 494V486.600A3.500 3.500 0 0 1 401.200 486.600V489.600A3.500 3.500 0 0 0 408.200 489.600V482.200" fill="none" stroke="#dedede" stroke-width="1.4"/>
<path d="M394.2 516.3Q401.2 513.9 408.4 516.3V528.1Q401.2 525.1 394.2 528.1Z" fill="url(#gg)"/>
<path d="M394.2 550.5Q401.2 548.1 408.4 550.5V562.3Q401.2 559.3 394.2 562.3Z" fill="url(#gr)" stroke="#14d8aa" stroke-width="1.3"/>
<path d="M394.2 584.8Q401.2 582.4 408.4 584.8V596.6Q401.2 593.6 394.2 596.6Z M401.3 583.6V595.1 M394.2 590.7Q401.2 588.0 408.4 590.7" fill="none" stroke="#14c8a0" stroke-width="1.3"/>
<path d="M394.2 618.8Q401.2 616.4 408.4 618.8V630.6Q401.2 627.6 394.2 630.6Z" fill="url(#gr)"/>
<circle cx="407.600" cy="630.6" r="2.3" fill="#14e2b2" stroke="#2e2e30" stroke-width="0.8"/>
</svg>


<div id="tbar"></div>
<svg class="abs" style="left:573px;top:49px" width="484" height="50" viewBox="573 49 484 50">
<path d="M602.6 66H597.2A8.200 8.200 0 0 0 597.200 82.400H602.600V78.200H597.200A4 4 0 0 1 597.200 70.200H602.600Z" fill="#ececec"/><path d="M599 65.500V70.700M599 77.700V82.900" stroke="#2e2e30" stroke-width="0.9"/><path d="M606.5 66V82.400" stroke="#ececec" stroke-width="1.1"/><circle cx="606.5" cy="74.200" r="3.300" fill="#12c8a0" stroke="#2e2e30" stroke-width="1"/>
<path d="M631.300 83V74.500A8.500 8.500 0 0 1 639.800 66H643.500L647.200 69.500V80.200H654V83Z" fill="#ececec"/><path d="M643.500 66L647.200 69.500" stroke="#9a9a9a" stroke-width="1.200"/><circle cx="639.400" cy="73.400" r="4.600" fill="#ececec" stroke="#3a3a3a" stroke-width="1"/><circle cx="639.400" cy="73.400" r="2.700" fill="#12c8a0"/><path d="M631.300 79.300L634.500 77.500" stroke="#9a9a9a" stroke-width="1"/><rect x="648" y="80" width="5" height="2" fill="#9a9a9a"/><circle cx="645.300" cy="80.900" r="1.700" fill="#12c8a0" stroke="#2e2e30" stroke-width="0.700"/>
<path d="M677 64.500L679.500 63H690L691.500 64.500V66.200H677Z" fill="#ececec"/><rect x="682.700" y="66.200" width="5.200" height="18.800" fill="#ececec"/><path d="M684.800 68H687.900M684.800 70.200H686.600M684.800 72.400H687.900M684.800 74.600H686.600" stroke="#3a3a3a" stroke-width="0.8"/><path d="M676 72.800H682.700V82.500L680.200 80V75.300H676Z" fill="#c9c9c9"/><path d="M687.900 73.500H695.600V75.800H690.600V80L687.900 82.500Z" fill="#c9c9c9"/><rect x="681" y="83.400" width="8.600" height="1.800" fill="#dcdcdc"/><circle cx="692.600" cy="70.500" r="3" fill="#12c8a0" stroke="#2e2e30" stroke-width="0.9"/>
<rect x="708" y="61" width="1" height="26" fill="#555557"/>
<g transform="rotate(0 730 74)"><path d="M733.8 74.0H738.0" stroke="#12c8a0" stroke-width="1.600"/><path d="M742.0 74.0L736.8 70.4L736.8 77.6Z" fill="#12c8a0"/></g>
<g transform="rotate(90 730 74)"><path d="M733.8 74.0H738.0" stroke="#12c8a0" stroke-width="1.600"/><path d="M742.0 74.0L736.8 70.4L736.8 77.6Z" fill="#12c8a0"/></g>
<g transform="rotate(180 730 74)"><path d="M733.8 74.0H738.0" stroke="#12c8a0" stroke-width="1.600"/><path d="M742.0 74.0L736.8 70.4L736.8 77.6Z" fill="#12c8a0"/></g>
<g transform="rotate(270 730 74)"><path d="M733.8 74.0H738.0" stroke="#12c8a0" stroke-width="1.600"/><path d="M742.0 74.0L736.8 70.4L736.8 77.6Z" fill="#12c8a0"/></g>
<circle cx="730" cy="74" r="2.200" fill="#fff"/>
<g transform="translate(1545.6 0) scale(-1 1)"><path d="M772.8 62.0L779.6 64.2L783.8 70.0L783.8 77.2L779.6 83.0L772.8 85.2L766.0 83.0L761.8 77.2L761.8 70.0L766.0 64.2Z" fill="#e2e2e2"/>
<path d="M783.8 70.0L783.8 77.2L779.6 83.0L772.8 85.2L776.0 79.1Z" fill="#c4c4c4"/>
<path d="M772.8 62.0L776.0 68.1M779.6 64.2L776.0 68.1M783.8 70.0L776.0 68.1M783.8 77.2L776.0 79.1M779.6 83.0L776.0 79.1M772.8 85.2L776.0 79.1M766.0 83.0L766.4 73.6M761.8 77.2L766.4 73.6M761.8 70.0L766.4 73.6M766.0 64.2L766.4 73.6" stroke="#2a2a2a" stroke-width="0.800" fill="none"/>
<path d="M776.0 68.1L776.0 79.1L766.4 73.6Z" fill="#12c8a0" stroke="#2a2a2a" stroke-width="0.800"/>
<path d="M772.8 62.0L779.6 64.2L783.8 70.0L783.8 77.2L779.6 83.0L772.8 85.2L766.0 83.0L761.8 77.2L761.8 70.0L766.0 64.2Z" fill="none" stroke="#2a2a2a" stroke-width="0.700"/></g>
<path d="M816 61.600L826.800 82.300A10.800 4 0 0 1 805.200 82.300Z" fill="#c6c6c6"/><path d="M805.200 80.500A10.800 4.200 0 0 0 826.800 80.500A10.800 5.800 0 0 1 805.200 80.500Z" fill="#fff"/><path d="M807.500 70.300H824.500L828.500 79.200H803.500Z" fill="#2e2e30" fill-opacity="0.550" stroke="#dcdcdc" stroke-width="0.800"/><ellipse cx="816" cy="75" rx="7.300" ry="3.400" fill="#12c8a0" stroke="#1e1e1e" stroke-width="0.800"/>
<path d="M852 66.300V71.200A7.150 2.600 0 0 0 866.300 71.200V66.300Z" fill="#d4d4d4"/><ellipse cx="859.150" cy="66.300" rx="7.150" ry="2.600" fill="#fff"/><path d="M850.900 76.400H867.500L871.900 85.800H846.700Z" fill="#d6d6d6"/><ellipse cx="859.300" cy="81.100" rx="7" ry="2.800" fill="#12c8a0"/>
<path d="M891 66.300L898 63V81.500L891 84.800Z" fill="#d2d2d2"/><path d="M898.800 63L905.800 66.300V84.800L898.800 81.500Z" fill="#ececec"/><path d="M906.600 66.300L913.500 63V81.500L906.600 84.800Z" fill="#d2d2d2"/><path d="M891 74.500L898 71.500L905.800 74L913.500 71.500" fill="none" stroke="#2e2e30" stroke-width="0.900"/><circle cx="902.500" cy="72.800" r="2.800" fill="#12c8a0" stroke="#2e2e30" stroke-width="0.900"/>
<path d="M945 63.700L957 69V78.500L945 83.700L933 78.500V69Z" fill="#fff"/><path d="M933 69L945 74.200V83.700L933 78.500Z" fill="#ececec"/><path d="M957 69L945 74.200V83.700L957 78.500Z" fill="#c4c4c4"/><path d="M936.300 70.500L937.600 75.500M939.300 71.800L940.600 76.800M942.300 73.100L943.600 78.100" stroke="#12c8a0" stroke-width="1.300"/>
<ellipse cx="988" cy="66.900" rx="7" ry="3" fill="#12c8a0"/><path d="M979.500 76.400H996.500L1000.700 85.800H975.300Z" fill="#e0e0e0"/><ellipse cx="988" cy="81.200" rx="7" ry="2.800" fill="#2a2a2a"/>
<path d="M1021.600 64.800H1036A4.400 4.400 0 0 1 1036 73.600H1031" fill="none" stroke="#ececec" stroke-width="1.300"/><path d="M1030 73.800H1024.600A4.800 4.800 0 0 0 1024.600 83.400H1033" fill="none" stroke="#12c8a0" stroke-width="1.300"/>
<path d="M1034.9 73.6L1032.5 74.4L1033.7 76.6L1031.5 75.4L1030.7 77.8L1029.9 75.4L1027.7 76.6L1028.9 74.4L1026.5 73.6L1028.9 72.8L1027.7 70.6L1029.9 71.8L1030.7 69.4L1031.5 71.8L1033.7 70.6L1032.5 72.8Z" fill="#12c8a0"/>
<path d="M1039.600 79.200V86.200M1036.100 82.700H1043.100" stroke="#fff" stroke-width="1.300"/>
</svg>


<div class="btn" style="left:502px;top:786px;width:86px;height:30px;border-radius:5px"></div>
<div class="btn" style="left:963px;top:786px;width:30px;height:30px;background:#29292b"></div>
<div class="btn" style="left:994px;top:786px;width:30px;height:30px;background:#29292b"></div>
<div class="btn" style="left:1030px;top:786px;width:120px;height:30px;background:#29292b"></div>
<div class="btn" style="left:1156px;top:786px;width:30px;height:30px;background:#29292b"></div>
<svg class="abs" style="left:372px;top:690px" width="222" height="133" viewBox="372 690 222 133">
<path d="M374.400 738L418.500 708.100" stroke="#b4b4b4" stroke-width="1.200"/><path d="M374.400 787.700L424 809" stroke="#b4b4b4" stroke-width="1.200"/>
<path d="M432.700 697.100L419.600 709.300A3 3 0 0 1 416.400 704.600Z" fill="#0ba556"/>
<path d="M438.200 814.500L422.200 810.800A3 3 0 0 1 424.300 805.600Z" fill="#e2301e"/>
<path d="M448.400 705L485.800 721.200L450.800 745.200L413.800 730.700Z" fill="#2b2b2b" stroke="#383838" stroke-width="0.700"/>
<path d="M413.800 730.700L450.800 745.200L457.100 786.900L419.300 772Z" fill="#2e2e2e" stroke="#383838" stroke-width="0.700"/>
<path d="M450.800 745.200L485.800 721.200L491.800 763.300L457.100 786.900Z" fill="#2a2a2a" stroke="#383838" stroke-width="0.700"/>
<path d="M412.200 723.100L419.300 772" stroke="#2446cf" stroke-width="2"/><path d="M419.300 772L462.600 790" stroke="#c9104e" stroke-width="2"/>
<text x="406" y="716.600" font-family="Liberation Sans,sans-serif" font-size="13.500" fill="#1b5be2">Z</text>
<text x="467" y="799" font-family="Liberation Sans,sans-serif" font-size="13.500" fill="#c9104e">X</text>
<text font-family="Liberation Sans,sans-serif" font-size="10.500" fill="#ececec" text-anchor="middle" transform="matrix(0.93 0.367 0.132 0.991 434.300 762)">Front</text>
<text font-family="Liberation Sans,sans-serif" font-size="10.500" fill="#ececec" text-anchor="middle" transform="matrix(0.827 -0.562 0.149 0.989 471.500 758.300)">Right</text>
<text font-family="Liberation Sans,sans-serif" font-size="10.500" fill="#ececec" text-anchor="middle" transform="matrix(1.0 0.424 -0.70 0.52 447.900 727.000)">Top</text>
<g fill="none" stroke="#12f0d0" stroke-width="2.300"><path d="M510 798.300V794.300H514M519.900 794.300H523.900V798.300M523.900 803.700V807.700H519.900M514 807.700H510V803.700"/></g>
<rect x="512.400" y="796.400" width="9.200" height="9" fill="#fff" stroke="#1e1e1e" stroke-width="1"/>
<defs><radialGradient id="sph" cx="0.38" cy="0.32" r="0.75"><stop offset="0" stop-color="#fff"/><stop offset="0.55" stop-color="#c4c4c4"/><stop offset="1" stop-color="#6e6e6e"/></radialGradient><linearGradient id="cyl" x1="0" y1="0" x2="0" y2="1"><stop offset="0" stop-color="#8a8a8a"/><stop offset="0.35" stop-color="#dedede"/><stop offset="0.7" stop-color="#f4f4f4"/><stop offset="1" stop-color="#8a8a8a"/></linearGradient></defs>
<circle cx="545" cy="800.600" r="8.500" fill="url(#sph)" stroke="#1a1a1a" stroke-width="0.800"/><path d="M546.500 792.200Q549 800.600 546.500 809M536.600 802Q545 804.600 553.400 802" fill="none" stroke="#1a1a1a" stroke-width="1.100"/>
<path d="M569 792H574V809.900H569A4.900 8.950 0 0 1 569 792Z" fill="url(#cyl)"/><ellipse cx="574.300" cy="800.950" rx="4.300" ry="8.950" fill="#fafafa"/><ellipse cx="575" cy="800.950" rx="2.700" ry="5.300" fill="#8c8c8c"/><rect x="575" y="795.650" width="4.500" height="10.600" fill="url(#cyl)"/><ellipse cx="579.800" cy="800.950" rx="2.200" ry="4.800" fill="#fff"/>
</svg>
<svg class="abs" style="left:958px;top:782px" width="299" height="41" viewBox="958 782 299 41">
<path d="M977.900 795V807.200M971.800 801.100H984" stroke="#c6c6c6" stroke-width="1.500"/>
<path d="M1004.500 799.100L1009.100 803.900L1013.600 799.100" fill="none" stroke="#a8a8a8" stroke-width="1.300"/>
<path d="M1044.900 797.600L1048.900 799.800V804.400L1044.900 806.700L1040.900 804.400V799.800Z" fill="#14a884"/><path d="M1044.900 802.100V794.800M1044.900 802.100L1037.500 807.600M1044.900 802.100L1052.300 807.600" stroke="#c4c4c4" stroke-width="1.100" fill="none"/><circle cx="1044.900" cy="794.300" r="1.100" fill="#c4c4c4"/><path d="M1037 805.300L1037 808.200L1039.600 808.200M1052.800 805.300V808.200H1050.200" fill="none" stroke="#c4c4c4" stroke-width="0.900"/>
<path d="M1164.600 806.200H1177.800M1166 806V800.200A5.200 5.900 0 0 1 1176.400 800.200V806" fill="none" stroke="#c8c8c8" stroke-width="1.300"/><path d="M1168.900 808.800H1173.500" stroke="#c8c8c8" stroke-width="1.300"/>
<rect x="1237.200" y="788" width="8" height="27.500" fill="#101d1d" stroke="#1d7c72" stroke-width="2"/>
</svg>
<div class="abs" style="left:1059.300px;top:793px;font-size:12.500px;line-height:16px;color:#f4f4f4;letter-spacing:-0.150px;-webkit-text-stroke:0.350px #f4f4f4">Global CS</div>
<div class="abs" style="left:1205.500px;top:799px;font-size:13px;line-height:16px;color:#f4f4f4;-webkit-text-stroke:0.350px #f4f4f4">1%</div>

<div class="abs" style="left:0;top:0;width:1257px;height:825px;border-radius:9px;box-shadow:inset 0 0 0 1px #3c3c3e;pointer-events:none"></div>
</div>
</body>
</html>
